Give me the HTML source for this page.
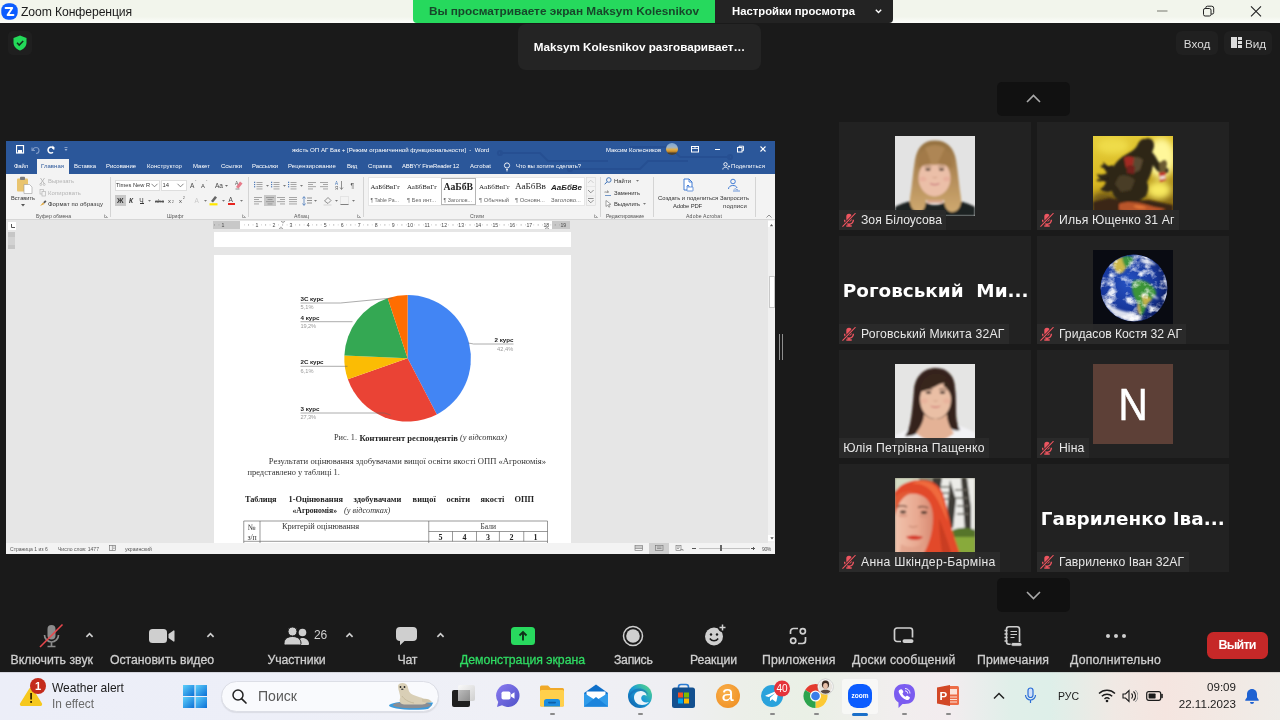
<!DOCTYPE html>
<html lang="ru">
<head>
<meta charset="utf-8">
<title>Zoom Конференция</title>
<style>
*{box-sizing:border-box;margin:0;padding:0}
html,body{width:1280px;height:720px;overflow:hidden;background:#1a1a1a;font-family:"Liberation Sans","DejaVu Sans",sans-serif;}
.abs{position:absolute}
#root{will-change:transform;position:relative;width:1280px;height:720px;overflow:hidden;background:#1a1a1a}
/* title bar */
#titlebar{left:0;top:0;width:1280px;height:22.500px;background:linear-gradient(180deg,#f2f5ec 0,#f2f5ec 72%,#fcfdfa 100%)}
#titlebar .ttl{left:21px;top:4.5px;font-size:12.2px;color:#1c1c1c;letter-spacing:-0.1px;white-space:nowrap}
#banner{left:413px;top:0;width:302px;height:22.500px;background:#26d95d;border-radius:0 0 0 4px;color:#17472a;font-weight:bold;font-size:11.800px;text-align:center;line-height:22px;white-space:nowrap}
#viewset{left:715px;top:0;width:178px;height:22.500px;background:#232323;border-radius:0 0 4px 0;color:#fff;font-weight:bold;font-size:11.300px;line-height:22px;white-space:nowrap;padding-left:17px}
/* toast */
#toast{left:518px;top:24px;width:243px;height:46px;background:#242424;border-radius:8px;color:#fff;font-weight:bold;font-size:11.700px;line-height:46px;text-align:center;white-space:nowrap}
.tbtn{background:#202020;border-radius:6px;color:#dadada;font-size:11.700px;line-height:25px;height:24px;white-space:nowrap}
/* tiles */
.tile{background:#222222;width:191.500px;height:107.600px}
.tile .lbl{position:absolute;left:0;bottom:0;height:19.600px;background:rgba(42,42,42,.94);color:#e8e8e8;font-size:12.200px;line-height:21.600px;white-space:nowrap;padding:0 4.500px 0 21.800px}
.tile .lbl.nomic{padding-left:4px}
.tile .big{position:absolute;left:3.600px;top:43.300px;color:#fff;font-weight:bold;font-size:18.400px;white-space:nowrap;font-family:"DejaVu Sans","Liberation Sans",sans-serif}
.av{position:absolute;left:55.800px;top:13.600px;width:80px;height:80px;overflow:hidden}
.mic{position:absolute;left:2.800px;top:3px}
.tx{position:absolute;white-space:pre}
.navbtn{background:#111;border-radius:5px;width:73px;height:34px}
/* zoom toolbar */
.zb{position:absolute;top:653px;color:#ddd;font-size:12.5px;white-space:nowrap;transform:translateX(-50%)}
/* taskbar */
#taskbar{left:0;top:672px;width:1280px;height:48px;background:linear-gradient(90deg,#eef0f6 0%,#e9eff7 30%,#e6eef6 55%,#f1ece9 75%,#f3ece6 100%)}
</style>
</head>
<body>
<div id="root">
<!-- TITLEBAR -->
<div id="titlebar" class="abs">
  <svg class="abs" style="left:1px;top:3px" width="17" height="17" viewBox="0 0 17 17"><rect x="0.300" y="0.300" width="16.400" height="16.400" rx="7" fill="#0b5cff"/><path d="M4.6 5h6.6L6.6 12h5.8" fill="none" stroke="#fff" stroke-width="2" stroke-linejoin="round" stroke-linecap="round"/></svg>
  <div class="abs ttl">Zoom Конференция</div>
  <svg class="abs" style="left:1150px;top:0" width="130" height="22" viewBox="0 0 130 22"><path d="M7 11h10.500" stroke="#8a8c84" stroke-width="1.200"/><rect x="53.500" y="8.500" width="7.500" height="7.500" rx="1.600" fill="none" stroke="#222" stroke-width="1"/><path d="M55.800 8.500v-0.700a1.600 1.600 0 0 1 1.600-1.600h4.300a2 2 0 0 1 2 2v4.300a1.600 1.600 0 0 1-1.600 1.600h-1" fill="none" stroke="#222" stroke-width="1"/><path d="M101 6.300l10 10M111 6.300l-10 10" stroke="#222" stroke-width="1.100"/></svg>
</div>
<div id="banner" class="abs">Вы просматриваете экран Maksym Kolesnikov</div>
<div id="viewset" class="abs">Настройки просмотра<svg class="abs" style="left:160px;top:9px" width="7" height="5" viewBox="0 0 7 5"><path d="M0.800 0.800l2.700 2.700L6.200 0.800" fill="none" stroke="#fff" stroke-width="1.400"/></svg></div>
<!-- shield -->
<div class="abs" style="left:8px;top:31px;width:24px;height:24px;border-radius:5px;background:#1f1f1f"></div>
<svg class="abs" style="left:13px;top:35px" width="14" height="16" viewBox="0 0 14 16"><path d="M7 0.500L13.500 3v4.500c0 4-3 6.800-6.500 8C3.500 14.300 0.500 11.500 0.500 7.500V3z" fill="#23d959"/><path d="M4 7.800l2.200 2.200L10.200 6" fill="none" stroke="#14301c" stroke-width="1.600"/></svg>
<div id="toast" class="abs">Maksym Kolesnikov разговаривает…</div>
<div class="abs tbtn" style="left:1176px;top:31px;width:42px;text-align:center">Вход</div>
<div class="abs tbtn" style="left:1224px;top:31px;width:48px;padding-left:21px">Вид<svg class="abs" style="left:7px;top:6px" width="11" height="11" viewBox="0 0 11 11"><rect x="0" y="0" width="6" height="11" fill="#ddd"/><rect x="7" y="0" width="4" height="3" fill="#ddd"/><rect x="7" y="4" width="4" height="3" fill="#ddd"/><rect x="7" y="8" width="4" height="3" fill="#ddd"/></svg></div>

<!-- WORD -->
<div id="word" class="abs" style="left:6px;top:141px;width:769px;height:412.700px;background:#e6e6e6;overflow:hidden"></div>
<div class="abs" style="left:6px;top:141px;width:769px;height:33px;background:#2b579a;"></div>
<div class="abs" style="left:6px;top:174px;width:769px;height:45.5px;background:#f3f3f3;"></div>
<div class="abs" style="left:6px;top:219px;width:769px;height:1px;background:#d6d6d6;"></div>
<svg class="abs" style="left:480px;top:141px" width="295" height="33" viewBox="0 0 295 33"><g fill="none" stroke="#234a8c" stroke-width="2.200" opacity=".55"><path d="M20 12h40l8 8h60M150 6h40l10 10h50M90 28h70l8-8h40"/><circle cx="20" cy="12" r="2"/><circle cx="250" cy="16" r="2"/><circle cx="90" cy="28" r="2"/></g></svg>
<svg class="abs" style="left:16px;top:145px" width="60" height="10" viewBox="0 0 60 10"><rect x="0.500" y="0.500" width="7" height="7.500" fill="none" stroke="#fff" stroke-width="1.200"/><rect x="2" y="5" width="4" height="3" fill="#fff"/><path d="M17 5.500a3 3 0 1 1 3 3M16 2.500v3h3" fill="none" stroke="#7f9ac6" stroke-width="1.100"/><path d="M38 4.500a3 3 0 1 0-1 2.800" fill="none" stroke="#fff" stroke-width="1.500"/><path d="M36.500 0.500l2.300 2.200-2.800 1.200z" fill="#fff"/><path d="M48.500 4h3l-1.500 2z" fill="#9fb4d6"/><path d="M48.500 2.500h3" stroke="#9fb4d6" stroke-width=".8"/></svg>
<div class="abs" style="left:666px;top:143px;width:12px;height:12px;border-radius:6px;background:linear-gradient(180deg,#7fa6cf 0%,#9db4c8 35%,#e2ad45 55%,#c98f2e 70%,#4a4030 85%)"></div>
<svg class="abs" style="left:690px;top:145px" width="80" height="9" viewBox="0 0 80 9"><rect x="1.500" y="1.500" width="7" height="5.500" fill="none" stroke="#fff" stroke-width="1"/><path d="M1.500 3.500h7M5 3.500v-2" stroke="#fff" stroke-width=".8"/><path d="M25 4.500h5" stroke="#fff" stroke-width="1"/><rect x="47.500" y="2.500" width="4.500" height="4.500" fill="none" stroke="#fff" stroke-width="1"/><path d="M49 2.500v-1.300h4.500v4.500h-1.500" fill="none" stroke="#fff" stroke-width=".9"/><path d="M70.500 1.500l5 5M75.500 1.500l-5 5" stroke="#fff" stroke-width="1.100"/></svg>
<div class="abs" style="left:36.500px;top:158.500px;width:32.500px;height:16px;background:#f3f3f3"></div>
<svg class="abs" style="left:503px;top:161.500px" width="8" height="10" viewBox="0 0 8 10"><circle cx="4" cy="3.500" r="2.600" fill="none" stroke="#fff" stroke-width=".9"/><path d="M3 7.500h2M3.200 8.800h1.600" stroke="#fff" stroke-width=".8"/></svg>
<svg class="abs" style="left:722px;top:162px" width="8" height="8" viewBox="0 0 8 8"><circle cx="3.500" cy="2.300" r="1.700" fill="none" stroke="#fff" stroke-width=".9"/><path d="M0.800 7.500c0-3 5.400-3 5.400 0" fill="none" stroke="#fff" stroke-width=".9"/><path d="M6 4.500h2M7 3.500v2" stroke="#fff" stroke-width=".7"/></svg>
<svg class="abs" style="left:16px;top:176px" width="17" height="18" viewBox="0 0 17 18"><rect x="1" y="2.500" width="11" height="13" rx="1" fill="#e9c46f"/><rect x="4" y="0.800" width="5" height="3.200" rx=".8" fill="#7d7d7d"/><path d="M8 8.500h5.500l2.500 2.500v6.500H8z" fill="#fff" stroke="#9a9a9a" stroke-width=".6"/></svg>
<svg class="abs" style="left:21px;top:204px" width="4" height="3" viewBox="0 0 4 3"><path d="M0 0h4l-2 2.500z" fill="#555"/></svg>
<svg class="abs" style="left:39px;top:177px" width="8" height="31" viewBox="0 0 8 31"><path d="M1.500 1l4 6M5.500 1l-4 6" stroke="#b0b0b0" stroke-width=".8"/><circle cx="1.800" cy="7.500" r="1" fill="none" stroke="#b0b0b0" stroke-width=".6"/><circle cx="5.200" cy="7.500" r="1" fill="none" stroke="#b0b0b0" stroke-width=".6"/><rect x="1" y="12.500" width="3.500" height="4.500" fill="none" stroke="#b7b7b7" stroke-width=".7"/><rect x="3" y="14.500" width="3.500" height="4.500" fill="#f3f3f3" stroke="#b7b7b7" stroke-width=".7"/><path d="M1 29l3-3.500 1.500 1.500z" fill="#e2a83a"/><path d="M4.200 25.300l2-2 1.300 1.300-2 2z" fill="#555"/></svg>
<svg class="abs" style="left:104px;top:213.500px" width="4" height="4" viewBox="0 0 4 4"><path d="M0.500 0.500v3h3M1.500 1.500l2 2" fill="none" stroke="#777" stroke-width=".6"/></svg>
<div class="abs" style="left:110px;top:177px;width:0.7px;height:40px;background:#d4d4d4;"></div>
<div class="abs" style="left:248px;top:177px;width:0.7px;height:40px;background:#d4d4d4;"></div>
<div class="abs" style="left:362.5px;top:177px;width:0.7px;height:40px;background:#d4d4d4;"></div>
<div class="abs" style="left:600px;top:177px;width:0.7px;height:40px;background:#d4d4d4;"></div>
<div class="abs" style="left:652.5px;top:177px;width:0.7px;height:40px;background:#d4d4d4;"></div>
<div class="abs" style="left:754.7px;top:177px;width:0.7px;height:40px;background:#d4d4d4;"></div>
<div class="abs" style="left:114.500px;top:180px;width:45px;height:10.500px;background:#fff;border:.5px solid #dedede"></div>
<div class="abs" style="left:160.500px;top:180px;width:26.500px;height:10.500px;background:#fff;border:.5px solid #dedede"></div>
<svg class="abs" style="left:151px;top:183px" width="34" height="5" viewBox="0 0 34 5"><path d="M0.500 0.800l3 3 3-3M26.500 0.800l3 3 3-3" fill="none" stroke="#555" stroke-width=".7"/></svg>
<svg class="abs" style="left:224.500px;top:184.500px" width="3" height="2" viewBox="0 0 3 2"><path d="M0 0h3l-1.500 1.800z" fill="#666"/></svg>
<svg class="abs" style="left:235px;top:180px" width="9" height="10" viewBox="0 0 9 10"><path d="M1 7l4-5.500 2.500 2-4 5z" fill="#e77b8a"/><path d="M0.500 9h4" stroke="#666" stroke-width=".7"/><text x="0" y="5" font-size="5" font-family="Liberation Sans" fill="#555">A</text></svg>
<div class="abs" style="left:114.5px;top:194.5px;width:11.5px;height:11.5px;background:#c8c8c8;"></div>
<div class="abs" style="left:139.5px;top:203.2px;width:4.5px;height:0.6px;background:#333;"></div>
<div class="abs" style="left:155px;top:200.5px;width:9px;height:0.5px;background:#555;"></div>
<svg class="abs" style="left:148px;top:199.800px" width="3" height="2" viewBox="0 0 3 2"><path d="M0 0h3l-1.500 1.800z" fill="#777"/></svg>
<svg class="abs" style="left:204px;top:199.800px" width="3" height="2" viewBox="0 0 3 2"><path d="M0 0h3l-1.500 1.800z" fill="#777"/></svg>
<svg class="abs" style="left:222px;top:199.800px" width="3" height="2" viewBox="0 0 3 2"><path d="M0 0h3l-1.500 1.800z" fill="#777"/></svg>
<svg class="abs" style="left:240px;top:199.800px" width="3" height="2" viewBox="0 0 3 2"><path d="M0 0h3l-1.500 1.800z" fill="#777"/></svg>
<svg class="abs" style="left:209px;top:195px" width="9" height="11" viewBox="0 0 9 11"><path d="M2 6l4-5 2 1.600-4 5z" fill="#666"/><rect x="0.500" y="8.200" width="8" height="2.200" fill="#ffe600"/></svg>
<div class="abs" style="left:227.5px;top:203.3px;width:7.5px;height:2px;background:#e8251f;"></div>
<svg class="abs" style="left:242px;top:213.500px" width="4" height="4" viewBox="0 0 4 4"><path d="M0.500 0.500v3h3M1.500 1.500l2 2" fill="none" stroke="#777" stroke-width=".6"/></svg>
<svg class="abs" style="left:254px;top:181px" width="9" height="9" viewBox="0 0 9 9"><rect x="2.5" y="1" width="6" height=".7" fill="#858585"/><rect x="0" y="0.75" width="1.200" height="1.200" fill="#4a78b8"/><rect x="2.5" y="3.2" width="6" height=".7" fill="#858585"/><rect x="0" y="2.95" width="1.200" height="1.200" fill="#4a78b8"/><rect x="2.5" y="5.4" width="6" height=".7" fill="#858585"/><rect x="0" y="5.15" width="1.200" height="1.200" fill="#4a78b8"/><rect x="2.5" y="7.6" width="6" height=".7" fill="#858585"/></svg>
<svg class="abs" style="left:271px;top:181px" width="9" height="9" viewBox="0 0 9 9"><rect x="2.5" y="1" width="6" height=".7" fill="#858585"/><rect x="0" y="0.75" width="1.200" height="1.200" fill="#4a78b8"/><rect x="2.5" y="3.2" width="6" height=".7" fill="#858585"/><rect x="0" y="2.95" width="1.200" height="1.200" fill="#4a78b8"/><rect x="2.5" y="5.4" width="6" height=".7" fill="#858585"/><rect x="0" y="5.15" width="1.200" height="1.200" fill="#4a78b8"/><rect x="2.5" y="7.6" width="6" height=".7" fill="#858585"/></svg>
<svg class="abs" style="left:288px;top:181px" width="9" height="9" viewBox="0 0 9 9"><rect x="2.5" y="1" width="6" height=".7" fill="#858585"/><rect x="0" y="0.75" width="1.200" height="1.200" fill="#4a78b8"/><rect x="2.5" y="3.2" width="6" height=".7" fill="#858585"/><rect x="0" y="2.95" width="1.200" height="1.200" fill="#4a78b8"/><rect x="2.5" y="5.4" width="6" height=".7" fill="#858585"/><rect x="0" y="5.15" width="1.200" height="1.200" fill="#4a78b8"/><rect x="2.5" y="7.6" width="6" height=".7" fill="#858585"/></svg>
<svg class="abs" style="left:308px;top:181px" width="9" height="9" viewBox="0 0 9 9"><rect x="0" y="1" width="8" height=".7" fill="#858585"/><rect x="0" y="3.2" width="5" height=".7" fill="#858585"/><rect x="0" y="5.4" width="8" height=".7" fill="#858585"/><rect x="0" y="7.6" width="5" height=".7" fill="#858585"/></svg>
<svg class="abs" style="left:320px;top:181px" width="9" height="9" viewBox="0 0 9 9"><rect x="0" y="1" width="8" height=".7" fill="#858585"/><rect x="3" y="3.2" width="5" height=".7" fill="#858585"/><rect x="0" y="5.4" width="8" height=".7" fill="#858585"/><rect x="3" y="7.6" width="5" height=".7" fill="#858585"/></svg>
<svg class="abs" style="left:265.5px;top:184.500px" width="3" height="2" viewBox="0 0 3 2"><path d="M0 0h3l-1.500 1.800z" fill="#777"/></svg>
<svg class="abs" style="left:282.5px;top:184.500px" width="3" height="2" viewBox="0 0 3 2"><path d="M0 0h3l-1.500 1.800z" fill="#777"/></svg>
<svg class="abs" style="left:299.5px;top:184.500px" width="3" height="2" viewBox="0 0 3 2"><path d="M0 0h3l-1.500 1.800z" fill="#777"/></svg>
<svg class="abs" style="left:335px;top:180px" width="9" height="11" viewBox="0 0 9 11"><text x="0" y="4.500" font-size="4.500" font-family="Liberation Sans" fill="#3a6fb5">А</text><text x="0" y="9.500" font-size="4.500" font-family="Liberation Sans" fill="#666">Я</text><path d="M6.500 1v8M5 7.500l1.500 2 1.500-2" fill="none" stroke="#666" stroke-width=".7"/></svg>
<div class="abs" style="left:264px;top:194.5px;width:11.5px;height:11.5px;background:#c8c8c8;"></div>
<svg class="abs" style="left:254px;top:196px" width="9" height="9" viewBox="0 0 9 9"><rect x="0" y="1" width="8" height=".7" fill="#858585"/><rect x="0" y="3.2" width="5" height=".7" fill="#858585"/><rect x="0" y="5.4" width="8" height=".7" fill="#858585"/><rect x="0" y="7.6" width="5" height=".7" fill="#858585"/></svg>
<svg class="abs" style="left:265.5px;top:196px" width="9" height="9" viewBox="0 0 9 9"><rect x="0" y="1" width="8" height=".7" fill="#858585"/><rect x="1.5" y="3.2" width="5" height=".7" fill="#858585"/><rect x="0" y="5.4" width="8" height=".7" fill="#858585"/><rect x="1.5" y="7.6" width="5" height=".7" fill="#858585"/></svg>
<svg class="abs" style="left:277px;top:196px" width="9" height="9" viewBox="0 0 9 9"><rect x="0" y="1" width="8" height=".7" fill="#858585"/><rect x="3" y="3.2" width="5" height=".7" fill="#858585"/><rect x="0" y="5.4" width="8" height=".7" fill="#858585"/><rect x="3" y="7.6" width="5" height=".7" fill="#858585"/></svg>
<svg class="abs" style="left:288.5px;top:196px" width="9" height="9" viewBox="0 0 9 9"><rect x="0" y="1" width="8" height=".7" fill="#858585"/><rect x="0" y="3.2" width="8" height=".7" fill="#858585"/><rect x="0" y="5.4" width="8" height=".7" fill="#858585"/><rect x="0" y="7.6" width="8" height=".7" fill="#858585"/></svg>
<svg class="abs" style="left:302px;top:195.500px" width="10" height="10" viewBox="0 0 10 10"><path d="M2 1v8M0.500 2.500l1.500-2 1.500 2M0.500 7.500l1.500 2 1.500-2" fill="none" stroke="#3a6fb5" stroke-width=".7"/><path d="M5 2h5M5 4.500h5M5 7h5" stroke="#666" stroke-width=".7"/></svg>
<svg class="abs" style="left:323px;top:195.500px" width="10" height="10" viewBox="0 0 10 10"><path d="M1.500 5l3.500-3.500 3 3-3 3z" fill="none" stroke="#666" stroke-width=".7"/><rect x="0.500" y="8.200" width="8" height="1.600" fill="#e0e0e0"/></svg>
<svg class="abs" style="left:340px;top:196px" width="9" height="9" viewBox="0 0 9 9"><rect x="0.500" y="0.500" width="8" height="8" fill="none" stroke="#c5c5c5" stroke-width=".6" stroke-dasharray="1 1"/><path d="M0.500 8.500h8" stroke="#666" stroke-width=".8"/></svg>
<svg class="abs" style="left:313.5px;top:199.800px" width="3" height="2" viewBox="0 0 3 2"><path d="M0 0h3l-1.500 1.800z" fill="#777"/></svg>
<svg class="abs" style="left:334.5px;top:199.800px" width="3" height="2" viewBox="0 0 3 2"><path d="M0 0h3l-1.500 1.800z" fill="#777"/></svg>
<svg class="abs" style="left:351.5px;top:199.800px" width="3" height="2" viewBox="0 0 3 2"><path d="M0 0h3l-1.500 1.800z" fill="#777"/></svg>
<svg class="abs" style="left:357px;top:213.500px" width="4" height="4" viewBox="0 0 4 4"><path d="M0.500 0.500v3h3M1.500 1.500l2 2" fill="none" stroke="#777" stroke-width=".6"/></svg>
<div class="abs" style="left:367.500px;top:177px;width:217px;height:28.500px;background:#fff;border:.6px solid #e6e6e6"></div>
<div class="abs" style="left:441px;top:177.500px;width:34.500px;height:27.500px;border:1px solid #b5b5b5;background:#fff"></div>
<svg class="abs" style="left:586px;top:177px" width="10" height="29" viewBox="0 0 10 29"><rect x="0.300" y="0.300" width="9" height="28" fill="#f3f3f3" stroke="#d8d8d8" stroke-width=".6"/><path d="M2 6l2.800-2.800L7.600 6" fill="none" stroke="#c0c0c0" stroke-width=".7"/><path d="M2 13l2.800 2.800L7.600 13" fill="none" stroke="#666" stroke-width=".7"/><path d="M2 21.500h5.600M2 23l2.800 2.800L7.600 23" fill="none" stroke="#666" stroke-width=".7"/><path d="M0.300 9.500h9M0.300 19h9" stroke="#d8d8d8" stroke-width=".5"/></svg>
<svg class="abs" style="left:594px;top:213.500px" width="4" height="4" viewBox="0 0 4 4"><path d="M0.500 0.500v3h3M1.500 1.500l2 2" fill="none" stroke="#777" stroke-width=".6"/></svg>
<svg class="abs" style="left:604px;top:177px" width="9" height="31" viewBox="0 0 9 31"><circle cx="4.800" cy="3" r="2.300" fill="none" stroke="#3a6fb5" stroke-width=".9"/><path d="M3 4.800l-2.300 2.500" stroke="#3a6fb5" stroke-width="1"/><text x="0.500" y="16" font-size="4" font-family="Liberation Sans" fill="#666">ab</text><path d="M1 18.500h6" stroke="#3a6fb5" stroke-width=".7"/><path d="M2 23.500l0 6 1.700-1.500 1.200 2.200 1-.5-1.200-2.200 2.200-.2z" fill="#fff" stroke="#666" stroke-width=".6"/></svg>
<svg class="abs" style="left:636px;top:180px" width="3" height="2" viewBox="0 0 3 2"><path d="M0 0h3l-1.500 1.800z" fill="#777"/></svg>
<svg class="abs" style="left:642.5px;top:203px" width="3" height="2" viewBox="0 0 3 2"><path d="M0 0h3l-1.500 1.800z" fill="#777"/></svg>
<svg class="abs" style="left:682px;top:178px" width="12" height="14" viewBox="0 0 12 14"><path d="M2 1h5l3 3v8H2z" fill="#fff" stroke="#2f6fd0" stroke-width=".9"/><path d="M7 1v3h3" fill="none" stroke="#2f6fd0" stroke-width=".8"/><path d="M6 11V7M4.500 8.500L6 7l1.500 1.500" fill="none" stroke="#2f6fd0" stroke-width=".8"/><rect x="5" y="9" width="6" height="4" rx=".5" fill="#fff" stroke="#2f6fd0" stroke-width=".7"/></svg>
<svg class="abs" style="left:727px;top:178px" width="14" height="14" viewBox="0 0 14 14"><circle cx="6" cy="3.500" r="2.300" fill="none" stroke="#2f6fd0" stroke-width=".9"/><path d="M1.500 11c0-4.500 8-4.500 8.500-1" fill="none" stroke="#2f6fd0" stroke-width=".9"/><path d="M7 11.500c1.500-2 2.500 1 4 0M6 13h7" fill="none" stroke="#2f6fd0" stroke-width=".7"/></svg>
<svg class="abs" style="left:765.500px;top:214px" width="6" height="4" viewBox="0 0 6 4"><path d="M0.500 3.500l2.500-2.500 2.500 2.500" fill="none" stroke="#666" stroke-width=".7"/></svg>
<div class="abs" style="left:8px;top:221.5px;width:7.5px;height:8px;background:#fff;"></div>
<svg class="abs" style="left:10.500px;top:223.500px" width="4" height="4" viewBox="0 0 4 4"><path d="M0.500 0v3.500H4" fill="none" stroke="#444" stroke-width=".9"/></svg>
<div class="abs" style="left:8.2px;top:232px;width:6.6px;height:5px;background:#c6c6c6;"></div>
<div class="abs" style="left:8.2px;top:237px;width:6.6px;height:8px;background:#d2d2d2;"></div>
<div class="abs" style="left:8.2px;top:245px;width:6.6px;height:3.5px;background:#c6c6c6;"></div>
<div class="abs" style="left:8px;top:255px;width:8px;height:288px;background:#e0e0e0;opacity:.0"></div>
<div class="abs" style="left:213.4px;top:221px;width:356.6px;height:7.6px;background:#fff;"></div>
<div class="abs" style="left:213.4px;top:221px;width:27px;height:7.6px;background:#c8c8c8;"></div>
<div class="abs" style="left:552px;top:221px;width:18px;height:7.6px;background:#c8c8c8;"></div>
<svg class="abs" style="left:213.400px;top:221px" width="357" height="8" viewBox="0 0 357 8"><g fill="#4a4a4a" font-family="Liberation Sans" font-size="5.200" text-anchor="middle"><text x="9.98" y="5.900">1</text><rect x="5.725" y="3.5" width=".5" height="0.8" fill="#888"/><rect x="1.47" y="3" width=".5" height="1.8" fill="#888"/><text x="44.02" y="5.900">1</text><rect x="39.765" y="3.5" width=".5" height="0.8" fill="#888"/><rect x="35.51" y="3" width=".5" height="1.8" fill="#888"/><rect x="31.255" y="3.5" width=".5" height="0.8" fill="#888"/><text x="61.04" y="5.900">2</text><rect x="56.785" y="3.5" width=".5" height="0.8" fill="#888"/><rect x="52.53" y="3" width=".5" height="1.8" fill="#888"/><rect x="48.275" y="3.5" width=".5" height="0.8" fill="#888"/><text x="78.06" y="5.900">3</text><rect x="73.805" y="3.5" width=".5" height="0.8" fill="#888"/><rect x="69.55" y="3" width=".5" height="1.8" fill="#888"/><rect x="65.295" y="3.5" width=".5" height="0.8" fill="#888"/><text x="95.08" y="5.900">4</text><rect x="90.825" y="3.5" width=".5" height="0.8" fill="#888"/><rect x="86.57" y="3" width=".5" height="1.8" fill="#888"/><rect x="82.315" y="3.5" width=".5" height="0.8" fill="#888"/><text x="112.1" y="5.900">5</text><rect x="107.845" y="3.5" width=".5" height="0.8" fill="#888"/><rect x="103.59" y="3" width=".5" height="1.8" fill="#888"/><rect x="99.335" y="3.5" width=".5" height="0.8" fill="#888"/><text x="129.12" y="5.900">6</text><rect x="124.865" y="3.5" width=".5" height="0.8" fill="#888"/><rect x="120.61" y="3" width=".5" height="1.8" fill="#888"/><rect x="116.355" y="3.5" width=".5" height="0.8" fill="#888"/><text x="146.14" y="5.900">7</text><rect x="141.885" y="3.5" width=".5" height="0.8" fill="#888"/><rect x="137.63" y="3" width=".5" height="1.8" fill="#888"/><rect x="133.375" y="3.5" width=".5" height="0.8" fill="#888"/><text x="163.16" y="5.900">8</text><rect x="158.905" y="3.5" width=".5" height="0.8" fill="#888"/><rect x="154.65" y="3" width=".5" height="1.8" fill="#888"/><rect x="150.395" y="3.5" width=".5" height="0.8" fill="#888"/><text x="180.18" y="5.900">9</text><rect x="175.925" y="3.5" width=".5" height="0.8" fill="#888"/><rect x="171.67" y="3" width=".5" height="1.8" fill="#888"/><rect x="167.415" y="3.5" width=".5" height="0.8" fill="#888"/><text x="197.2" y="5.900">10</text><rect x="192.945" y="3.5" width=".5" height="0.8" fill="#888"/><rect x="188.69" y="3" width=".5" height="1.8" fill="#888"/><rect x="184.435" y="3.5" width=".5" height="0.8" fill="#888"/><text x="214.22" y="5.900">11</text><rect x="209.965" y="3.5" width=".5" height="0.8" fill="#888"/><rect x="205.71" y="3" width=".5" height="1.8" fill="#888"/><rect x="201.455" y="3.5" width=".5" height="0.8" fill="#888"/><text x="231.24" y="5.900">12</text><rect x="226.985" y="3.5" width=".5" height="0.8" fill="#888"/><rect x="222.73" y="3" width=".5" height="1.8" fill="#888"/><rect x="218.475" y="3.5" width=".5" height="0.8" fill="#888"/><text x="248.26" y="5.900">13</text><rect x="244.005" y="3.5" width=".5" height="0.8" fill="#888"/><rect x="239.75" y="3" width=".5" height="1.8" fill="#888"/><rect x="235.495" y="3.5" width=".5" height="0.8" fill="#888"/><text x="265.28" y="5.900">14</text><rect x="261.025" y="3.5" width=".5" height="0.8" fill="#888"/><rect x="256.77" y="3" width=".5" height="1.8" fill="#888"/><rect x="252.515" y="3.5" width=".5" height="0.8" fill="#888"/><text x="282.3" y="5.900">15</text><rect x="278.045" y="3.5" width=".5" height="0.8" fill="#888"/><rect x="273.79" y="3" width=".5" height="1.8" fill="#888"/><rect x="269.535" y="3.5" width=".5" height="0.8" fill="#888"/><text x="299.32" y="5.900">16</text><rect x="295.065" y="3.5" width=".5" height="0.8" fill="#888"/><rect x="290.81" y="3" width=".5" height="1.8" fill="#888"/><rect x="286.555" y="3.5" width=".5" height="0.8" fill="#888"/><text x="316.34" y="5.900">17</text><rect x="312.085" y="3.5" width=".5" height="0.8" fill="#888"/><rect x="307.83" y="3" width=".5" height="1.8" fill="#888"/><rect x="303.575" y="3.5" width=".5" height="0.8" fill="#888"/><text x="333.36" y="5.900">18</text><rect x="329.105" y="3.5" width=".5" height="0.8" fill="#888"/><rect x="324.85" y="3" width=".5" height="1.8" fill="#888"/><rect x="320.595" y="3.5" width=".5" height="0.8" fill="#888"/><text x="350.38" y="5.900">19</text><rect x="346.125" y="3.5" width=".5" height="0.8" fill="#888"/><rect x="341.87" y="3" width=".5" height="1.8" fill="#888"/><rect x="337.615" y="3.5" width=".5" height="0.8" fill="#888"/></g><path d="M68 0l2 2.200 2-2.200zM66 8l2-2.200 2 2.200z" fill="#eee" stroke="#777" stroke-width=".5"/><path d="M332 8l2-2.200 2 2.200z" fill="#eee" stroke="#777" stroke-width=".5"/></svg>
<div class="abs" style="left:214px;top:231.5px;width:356.5px;height:15.5px;background:#fff;"></div>
<div class="abs" style="left:214px;top:255px;width:356.5px;height:288px;background:#fff;"></div>
<div class="abs" style="left:767.5px;top:220px;width:7.5px;height:323px;background:#f0f0f0;"></div>
<div class="abs" style="left:768.2px;top:535.2px;width:6.3px;height:6.2px;background:#fff;"></div>
<svg class="abs" style="left:769.500px;top:537px" width="4" height="3" viewBox="0 0 4 3"><path d="M0.300 0.300h3.400l-1.700 2.200z" fill="#555"/></svg>
<div class="abs" style="left:768.2px;top:221px;width:6.3px;height:6.2px;background:#fff;"></div>
<div class="abs" style="left:768.5px;top:276px;width:6px;height:32px;background:#fff;border:.5px solid #c8c8c8"></div>
<svg class="abs" style="left:769px;top:222.500px" width="5" height="4" viewBox="0 0 5 4"><path d="M0.800 3.200l1.700-2.200 1.700 2.200z" fill="#555"/></svg>
<svg class="abs" style="left:0;top:0" width="1280" height="720" viewBox="0 0 1280 720"><path d="M407.6 358.3L407.60 295.00A63.3 63.3 0 0 1 436.84 414.44Z" fill="#4285f4"/><path d="M407.6 358.3L436.84 414.44A63.3 63.3 0 0 1 347.87 379.25Z" fill="#ea4335"/><path d="M407.6 358.3L347.87 379.25A63.3 63.3 0 0 1 344.37 355.42Z" fill="#fbbc04"/><path d="M407.6 358.3L344.37 355.42A63.3 63.3 0 0 1 387.68 298.22Z" fill="#34a853"/><path d="M407.6 358.3L387.68 298.22A63.3 63.3 0 0 1 407.60 295.00Z" fill="#ff6d01"/><g fill="none" stroke="#666" stroke-width=".55"><path d="M300.500 303h40l52-5"/><path d="M300.500 321.700h52"/><path d="M300.500 366.300h47"/><path d="M300.500 413h84l6 2"/><path d="M513.500 344h-40l-5-1"/></g></svg>
<svg class="abs" style="left:0;top:0" width="1280" height="720" viewBox="0 0 1280 720"><g fill="none" stroke="#555" stroke-width=".6"><path d="M243.750 543V521h303.750v22M260 521v22M428.750 521v22M428.750 531.500h118.750M243.750 541.300h303.750M452.500 531.500v9.800M476.500 531.500v9.800M499.400 531.500v9.800M523.750 531.500v9.800"/></g></svg>
<div class="abs" style="left:6px;top:542.8px;width:769px;height:10.9px;background:#f3f3f3;"></div>
<svg class="abs" style="left:108.500px;top:545px" width="7" height="6" viewBox="0 0 7 6"><rect x="0.400" y="0.400" width="6" height="5" fill="none" stroke="#666" stroke-width=".6"/><path d="M3.400 0.400v5M4.200 2h1.500M4.200 3.500h1.500" stroke="#666" stroke-width=".5"/></svg>
<div class="abs" style="left:649.3px;top:543px;width:19.7px;height:10.5px;background:#cfcfcf;"></div>
<svg class="abs" style="left:634px;top:545px" width="52" height="6" viewBox="0 0 52 6"><g fill="none" stroke="#707070" stroke-width=".6"><rect x="1" y="0.500" width="7.500" height="5"/><path d="M1 2h7.500M1 3.500h7.500"/><rect x="21.500" y="0.500" width="7.500" height="5"/><path d="M23 2h4.500M23 3.500h4.500"/><rect x="42" y="0.500" width="5" height="5"/><path d="M43 2h3M43 3.500h2M46.500 4.500h2.500v1.500"/></g></svg>
<div class="abs" style="left:691.7px;top:548.2px;width:4px;height:0.7px;background:#555;"></div>
<div class="abs" style="left:698.6px;top:548.3px;width:51px;height:0.5px;background:#c2c2c2;"></div>
<div class="abs" style="left:719.6px;top:545.3px;width:2.2px;height:6.2px;background:#666;"></div>
<div class="abs" style="left:751px;top:548.2px;width:3.8px;height:0.7px;background:#555;"></div>
<div class="abs" style="left:752.55px;top:546.5px;width:0.7px;height:3.8px;background:#555;"></div>
<svg class="abs" style="left:38px;top:622px" width="28" height="28" viewBox="0 0 28 28"><rect x="9.500" y="3" width="8" height="14.500" rx="4" fill="#8c8c8c"/><path d="M6.500 13a7 7 0 0 0 14 0M13.500 20v4M9.500 24.500h8" fill="none" stroke="#8c8c8c" stroke-width="1.700"/><path d="M24.500 2.500L2 25" stroke="#e8474c" stroke-width="1.600"/></svg>
<svg class="abs" style="left:85px;top:632.2px" width="9" height="6" viewBox="0 0 9 6"><path d="M1.400 4.800l3.100-3.100 3.100 3.100" fill="none" stroke="#cfcfcf" stroke-width="1.700"/></svg>
<svg class="abs" style="left:148px;top:628px" width="28" height="16" viewBox="0 0 28 16"><rect x="1" y="1" width="18" height="14" rx="3.500" fill="#cfcfcf"/><path d="M20.500 6l5-3.500a.6.600 0 0 1 1 .5v10a.6.600 0 0 1-1 .5l-5-3.500z" fill="#cfcfcf"/></svg>
<svg class="abs" style="left:205.5px;top:632.2px" width="9" height="6" viewBox="0 0 9 6"><path d="M1.400 4.800l3.100-3.100 3.100 3.100" fill="none" stroke="#cfcfcf" stroke-width="1.700"/></svg>
<svg class="abs" style="left:283px;top:626px" width="27" height="20" viewBox="0 0 27 20"><circle cx="19.500" cy="6.500" r="3.800" fill="#cfcfcf"/><path d="M15 19c-.5-5 2-7 4.500-7s6 1.500 6.500 5.500c0 1-.5 1.500-1.500 1.500z" fill="#cfcfcf"/><circle cx="9.500" cy="5.500" r="4.500" fill="#cfcfcf" stroke="#1a1a1a" stroke-width="1"/><path d="M1 17.500c0-5 4-7 8.500-7s8.500 2 8.500 7c0 1-.6 1.500-1.500 1.500h-14c-.9 0-1.500-.5-1.500-1.500z" fill="#cfcfcf" stroke="#1a1a1a" stroke-width="1"/></svg>
<svg class="abs" style="left:345px;top:632.2px" width="9" height="6" viewBox="0 0 9 6"><path d="M1.400 4.800l3.100-3.100 3.100 3.100" fill="none" stroke="#cfcfcf" stroke-width="1.700"/></svg>
<svg class="abs" style="left:395px;top:626px" width="23" height="20" viewBox="0 0 23 20"><path d="M5 1h13a4 4 0 0 1 4 4v6a4 4 0 0 1-4 4h-8.500l-4.500 4.300v-4.300a4 4 0 0 1-4-4v-6a4 4 0 0 1 4-4z" fill="#cfcfcf"/></svg>
<svg class="abs" style="left:435.5px;top:632.2px" width="9" height="6" viewBox="0 0 9 6"><path d="M1.400 4.800l3.100-3.100 3.100 3.100" fill="none" stroke="#cfcfcf" stroke-width="1.700"/></svg>
<svg class="abs" style="left:511px;top:627px" width="24" height="18" viewBox="0 0 24 18"><rect x="0" y="0" width="24" height="18" rx="3.500" fill="#28d95e"/><path d="M12 13.500v-8M8.500 8.500l3.500-3.500 3.500 3.500" fill="none" stroke="#10301a" stroke-width="1.900"/></svg>
<svg class="abs" style="left:622px;top:625px" width="22" height="22" viewBox="0 0 22 22"><circle cx="11" cy="11" r="9.500" fill="none" stroke="#cfcfcf" stroke-width="1.500"/><circle cx="11" cy="11" r="6.800" fill="#cfcfcf"/></svg>
<svg class="abs" style="left:703px;top:623px" width="24" height="24" viewBox="0 0 24 24"><circle cx="11" cy="13.500" r="9" fill="#cfcfcf"/><circle cx="19.500" cy="4.500" r="4.500" fill="#1a1a1a"/><path d="M19.500 1.500v6M16.500 4.500h6" stroke="#cfcfcf" stroke-width="1.500"/><circle cx="8" cy="11.500" r="1.200" fill="#1a1a1a"/><circle cx="14" cy="11.500" r="1.200" fill="#1a1a1a"/><path d="M6.800 15.500c2 3 6.400 3 8.400 0" fill="none" stroke="#1a1a1a" stroke-width="1.400"/></svg>
<svg class="abs" style="left:789px;top:627px" width="18" height="18" viewBox="0 0 18 18"><g fill="none" stroke="#cfcfcf" stroke-width="1.700"><path d="M1.500 7V4.500a3 3 0 0 1 3-3H9M16.500 10v3.500a3 3 0 0 1-3 3H9"/><circle cx="13.800" cy="4.200" r="2.600"/><circle cx="4.200" cy="13.800" r="2.600"/></g></svg>
<svg class="abs" style="left:893px;top:626px" width="22" height="19" viewBox="0 0 22 19"><path d="M8 15.500H4a2.500 2.500 0 0 1-2.500-2.500V4.500A2.500 2.500 0 0 1 4 2h13a2.500 2.500 0 0 1 2.500 2.500v7" fill="none" stroke="#cfcfcf" stroke-width="1.700"/><rect x="9.500" y="13.200" width="11" height="3.800" rx="1.900" fill="#cfcfcf"/></svg>
<svg class="abs" style="left:1003px;top:625px" width="20" height="23" viewBox="0 0 20 23"><rect x="3.500" y="1.800" width="13" height="17.500" rx="2.500" fill="none" stroke="#cfcfcf" stroke-width="1.600"/><path d="M1.500 5.500h3M1.500 9h3M1.500 12.500h3M1.500 16h3" stroke="#cfcfcf" stroke-width="1.300"/><path d="M7.500 6.500h6.500M7.500 9.500h6.500M7.500 12.500h4" stroke="#cfcfcf" stroke-width="1.200"/><rect x="8" y="17.500" width="11" height="3.800" rx="1.900" fill="#cfcfcf" stroke="#1a1a1a" stroke-width=".8"/></svg>
<div class="abs" style="left:1106.2px;top:634.200px;width:3.600px;height:3.600px;border-radius:2px;background:#cfcfcf"></div>
<div class="abs" style="left:1114.2px;top:634.200px;width:3.600px;height:3.600px;border-radius:2px;background:#cfcfcf"></div>
<div class="abs" style="left:1122.2px;top:634.200px;width:3.600px;height:3.600px;border-radius:2px;background:#cfcfcf"></div>
<div class="abs" style="left:1206.500px;top:631.500px;width:61.500px;height:27px;border-radius:6.500px;background:#c62828"></div>
<div class="abs" style="left:0;top:672px;width:1280px;height:48px;background:linear-gradient(90deg,#eceef8 0%,#edeff8 22%,#eff0f6 40%,#efeff3 52%,#ecefe9 58%,#eaf0e6 63%,#f1eeee 70%,#f3ecef 74%,#e0efe9 79%,#deefe9 82%,#f0e9e4 87%,#f5e5e0 91%,#f2e9e4 96%,#efece8 100%);border-top:1px solid rgba(0,0,0,.10)"></div>
<svg class="abs" style="left:19px;top:677px" width="30" height="30" viewBox="0 0 30 30"><path d="M12 12.500L22.500 27.500a1 1 0 0 1-.8 1.500H2.300a1 1 0 0 1-.8-1.500z" fill="#f6c81e"/><path d="M12 10.500c.8 0 1.500.6 2 1.500l9 14.500c.5 1-.2 2-1.300 2H2.300c-1.100 0-1.800-1-1.300-2l9-14.500c.5-.9 1.200-1.500 2-1.500z" fill="#f6c81e"/><rect x="11.200" y="16" width="1.800" height="6.500" fill="#3a2a00"/><rect x="11.200" y="24" width="1.800" height="1.900" fill="#3a2a00"/><circle cx="19" cy="9" r="8" fill="#c42b1c"/><text x="19" y="13" font-family="Liberation Sans" font-size="11" font-weight="bold" fill="#fff" text-anchor="middle">1</text></svg>
<svg class="abs" style="left:183px;top:685px" width="24" height="23" viewBox="0 0 24 23"><defs><linearGradient id="wl" x1="0" y1="0" x2="1" y2="1"><stop offset="0" stop-color="#5fd0fb"/><stop offset="1" stop-color="#0a6fd6"/></linearGradient></defs><rect x="0" y="0" width="11.400" height="11" fill="url(#wl)"/><rect x="12.600" y="0" width="11.400" height="11" fill="url(#wl)"/><rect x="0" y="12" width="11.400" height="11" fill="url(#wl)"/><rect x="12.600" y="12" width="11.400" height="11" fill="url(#wl)"/></svg>
<div class="abs" style="left:221px;top:680.500px;width:218px;height:31px;border-radius:15.500px;background:#f9fafd;border:1px solid #dcdee6;box-shadow:0 1px 1px rgba(0,0,0,.08)"></div>
<svg class="abs" style="left:231px;top:688px" width="17" height="17" viewBox="0 0 17 17"><circle cx="7" cy="7" r="5" fill="none" stroke="#222" stroke-width="1.500"/><path d="M10.800 10.800l4.200 4.200" stroke="#222" stroke-width="1.700" stroke-linecap="round"/></svg>
<svg class="abs" style="left:388px;top:682px" width="51" height="29" viewBox="0 0 51 29"><defs><clipPath id="pc"><path d="M0 0h35.500a15 15 0 0 1 0 29H0z"/></clipPath></defs><g clip-path="url(#pc)"><ellipse cx="26" cy="23.500" rx="25" ry="4.200" fill="#3b9bdc"/><ellipse cx="24" cy="23" rx="19" ry="3.200" fill="#8a8d92"/><path d="M10 4c0-3.500 8-4.500 9.500 0 1 3 1 6 4 8 5 3 12 3 15 7 1.500 2-2 3.500-5 3.500H16c-4 0-5-3-4-6 1-3-2-8-2-12.500z" fill="#d9cfb6"/><path d="M34 17c4-1 8 0 10 3-3 1-7 1-10-.5z" fill="#cfc4a8"/><path d="M14 14c2 3 6 6 12 7" stroke="#c4b99c" stroke-width="1" fill="none"/><circle cx="12.500" cy="5" r=".9" fill="#222"/><circle cx="16.500" cy="5" r=".9" fill="#222"/><ellipse cx="14.300" cy="7.300" rx="1.300" ry=".8" fill="#444"/></g></svg>
<div class="abs" style="left:458px;top:685px;width:17px;height:15.500px;border-radius:2px;background:linear-gradient(135deg,#fafafa,#cfcfcf)"></div>
<div class="abs" style="left:452px;top:690px;width:18px;height:17px;border-radius:2px;background:#1f1f1f"></div>
<div class="abs" style="left:458px;top:690px;width:12px;height:10.500px;background:linear-gradient(135deg,#bdbdbd,#8d8d8d)"></div>
<svg class="abs" style="left:495px;top:683px" width="26" height="26" viewBox="0 0 26 26"><defs><linearGradient id="tc" x1="0" y1="0" x2="1" y2="1"><stop offset="0" stop-color="#8b7bf0"/><stop offset="1" stop-color="#4f52c8"/></linearGradient></defs><path d="M13 1a11.500 11.500 0 1 1-6 21.300L2 24l1.200-5A11.500 11.500 0 0 1 13 1z" fill="url(#tc)"/><rect x="6.500" y="8.500" width="9" height="8" rx="1.800" fill="#fff"/><path d="M16 11.500l3.500-2.300v6.600l-3.500-2.300z" fill="#fff"/></svg>
<svg class="abs" style="left:539px;top:684px" width="26" height="24" viewBox="0 0 26 24"><path d="M1 3a1.500 1.500 0 0 1 1.500-1.500h6.500l2.500 2.500H23.500a1.500 1.500 0 0 1 1.500 1.500V21a1.500 1.500 0 0 1-1.500 1.500h-21A1.500 1.500 0 0 1 1 21z" fill="#f0a928"/><path d="M1 7.500A1.500 1.500 0 0 1 2.500 6h21A1.500 1.500 0 0 1 25 7.500V21a1.500 1.500 0 0 1-1.500 1.500h-21A1.500 1.500 0 0 1 1 21z" fill="#ffd04c"/><path d="M5 17.500A2.500 2.500 0 0 1 7.500 15h11a2.500 2.500 0 0 1 2.500 2.500v5H5z" fill="#1b8de0"/><rect x="9" y="17.800" width="8" height="1.600" rx=".8" fill="#0c5fa8"/></svg>
<svg class="abs" style="left:583px;top:683px" width="26" height="25" viewBox="0 0 26 25"><path d="M1 10L13 1.500 25 10v13.500H1z" fill="#0f6fc9"/><path d="M3.500 8.500h19V18h-19z" fill="#fff"/><path d="M1 10l12 7.500L25 10v13.500H1z" fill="#2f9bea"/><path d="M1 23.500L13 14l12 9.500z" fill="#1b84dc"/></svg>
<svg class="abs" style="left:627px;top:683px" width="26" height="26" viewBox="0 0 26 26"><defs><linearGradient id="eg" x1="0" y1="1" x2="1" y2="0"><stop offset="0" stop-color="#0b57a6"/><stop offset=".5" stop-color="#1a9ad6"/><stop offset="1" stop-color="#5fe07a"/></linearGradient></defs><circle cx="13" cy="13" r="12" fill="url(#eg)"/><path d="M13.500 8c-4 0-6.500 3-6.500 6.500 0 4 3.300 7.500 8 7.500 3 0 5.500-1.200 7-3-2 .8-4.500.6-6-.5-2-1.400-2.300-4-1-5.500 1.200-1.400 3.500-1 4.500 0 0-3-2.500-5-6-5z" fill="#eaf4fb"/><path d="M1.500 15C2 9.500 6.500 5.500 12 5.500c4.500 0 8.500 2.500 9 6.500-1.500-2.500-4.500-4-7.500-4C8 8 3.500 11 1.500 15z" fill="#1467b3" opacity=".55"/></svg>
<svg class="abs" style="left:671px;top:683px" width="25" height="26" viewBox="0 0 25 26"><path d="M7.500 5.500V4a2.500 2.500 0 0 1 2.500-2.500h5A2.500 2.500 0 0 1 17.500 4v1.500" fill="none" stroke="#2b7cd3" stroke-width="1.600"/><rect x="1" y="4.500" width="23" height="20.500" rx="2.500" fill="#13508f"/><rect x="7" y="9.500" width="5" height="5" fill="#f25022"/><rect x="13" y="9.500" width="5" height="5" fill="#7fba00"/><rect x="7" y="15.500" width="5" height="5" fill="#00a4ef"/><rect x="13" y="15.500" width="5" height="5" fill="#ffb900"/></svg>
<div class="abs" style="left:716px;top:683.500px;width:24px;height:24px;border-radius:12px;background:radial-gradient(circle at 40% 35%,#f9b04a,#ee8a1d)"></div>
<svg class="abs" style="left:760px;top:679px" width="32" height="30" viewBox="0 0 32 30"><circle cx="12" cy="17" r="11" fill="#2aa3dc"/><path d="M5.500 16.500l12-5c.7-.3 1.200.2 1 1l-2 9.500c-.1.700-.7.900-1.300.5l-3-2.200-1.600 1.500c-.3.300-.7.200-.7-.3l.2-2.700 5-4.600-6.300 3.900-2.900-.9c-.6-.2-.6-.5-.4-.7z" fill="#fff"/><circle cx="22" cy="9.500" r="8" fill="#e5333a"/><text x="22" y="13.300" font-family="Liberation Sans" font-size="10" fill="#fff" text-anchor="middle">40</text></svg>
<svg class="abs" style="left:803px;top:678px" width="32" height="31" viewBox="0 0 32 31"><circle cx="12.500" cy="18" r="12" fill="#fff"/><path d="M12.500 18L2.100 12A12 12 0 0 1 22.900 12z" fill="#e33b2e"/><path d="M12.500 18L22.900 12A12 12 0 0 1 12.500 30z" fill="#fcc934"/><path d="M12.500 18L12.500 30A12 12 0 0 1 2.100 12z" fill="#2da44e"/><circle cx="12.500" cy="18" r="5.500" fill="#fff"/><circle cx="12.500" cy="18" r="4.300" fill="#3b7de9"/><circle cx="22.500" cy="8.700" r="7.800" fill="#fff" stroke="#bbb" stroke-width=".6"/><circle cx="22.500" cy="8.700" r="6.800" fill="#e8e4de"/><ellipse cx="22.500" cy="6.500" rx="3.600" ry="3.900" fill="#3a2a22"/><ellipse cx="22.500" cy="8" rx="2.400" ry="3" fill="#e8c0a8"/><path d="M17.500 13.500c1.500-2.500 8.500-2.500 10 0a6.800 6.800 0 0 1-10 0z" fill="#5a4a44"/></svg>
<div class="abs" style="left:841px;top:678px;width:38px;height:37px;border-radius:4px;background:rgba(255,255,255,.55);border:1px solid rgba(0,0,0,.04)"></div>
<div class="abs" style="left:848px;top:683.500px;width:24px;height:24px;border-radius:9px;background:#0b5cff"></div>
<div class="abs" style="left:852px;top:712.500px;width:16px;height:3px;border-radius:1.500px;background:#1a6fc9"></div>
<svg class="abs" style="left:892px;top:683px" width="25" height="27" viewBox="0 0 25 27"><path d="M12.500 1C6 1 2 4 2 11c0 4 1.500 7 4.500 8.500V25l4-4c.7.100 1.300.1 2 .1 6.500 0 10.500-3 10.500-10S19 1 12.500 1z" fill="#7b5cf0"/><path d="M8.500 6.500c.5-.5 1.300-.4 1.700.2l1 1.600c.3.500.2 1.100-.2 1.500l-.6.600c.6 1.500 1.800 2.700 3.300 3.300l.6-.6c.4-.4 1-.5 1.500-.2l1.600 1c.6.400.7 1.200.2 1.700l-.8.800c-.6.600-1.500.8-2.300.5-3.600-1.300-6.400-4.100-7.700-7.700-.3-.8-.1-1.700.5-2.300z" fill="#fff"/><path d="M13 5.500a5 5 0 0 1 5 5M13 7.800a2.800 2.800 0 0 1 2.800 2.800" fill="none" stroke="#fff" stroke-width=".9"/></svg>
<svg class="abs" style="left:936px;top:684px" width="24" height="23" viewBox="0 0 24 23"><rect x="8" y="2" width="15" height="19" rx="1.500" fill="#ed6c47"/><rect x="13" y="5" width="8" height="5.500" fill="#fbe3da"/><path d="M13 13h8M13 15.500h8M13 18h8" stroke="#fbe3da" stroke-width="1"/><path d="M1 3.500l13-2.500v21l-13-2.500z" fill="#d24726"/><text x="7.300" y="16" font-family="Liberation Sans" font-size="11.500" font-weight="bold" fill="#fff" text-anchor="middle">P</text></svg>
<div class="abs" style="left:550px;top:712.500px;width:5px;height:2.500px;border-radius:1.200px;background:#8a8a8a"></div>
<div class="abs" style="left:637.5px;top:712.500px;width:5px;height:2.500px;border-radius:1.200px;background:#8a8a8a"></div>
<div class="abs" style="left:769.5px;top:712.500px;width:5px;height:2.500px;border-radius:1.200px;background:#8a8a8a"></div>
<div class="abs" style="left:813.5px;top:712.500px;width:5px;height:2.500px;border-radius:1.200px;background:#8a8a8a"></div>
<div class="abs" style="left:901.5px;top:712.500px;width:5px;height:2.500px;border-radius:1.200px;background:#8a8a8a"></div>
<div class="abs" style="left:945.5px;top:712.500px;width:5px;height:2.500px;border-radius:1.200px;background:#8a8a8a"></div>
<svg class="abs" style="left:993px;top:691.500px" width="12" height="8" viewBox="0 0 12 8"><path d="M1 6.500l5-5 5 5" fill="none" stroke="#222" stroke-width="1.500"/></svg>
<svg class="abs" style="left:1024px;top:687px" width="13" height="17" viewBox="0 0 13 17"><rect x="4" y="1" width="5" height="9.500" rx="2.500" fill="#cfe0fa" stroke="#2b6ed8" stroke-width="1.200"/><path d="M1.500 8a5 5 0 0 0 10 0M6.500 13v3" fill="none" stroke="#2b6ed8" stroke-width="1.200"/></svg>
<svg class="abs" style="left:1097.500px;top:688px" width="18" height="15" viewBox="0 0 18 15"><g fill="none" stroke="#1b1b1b" stroke-width="1.400"><path d="M1 5.500a11.500 11.500 0 0 1 16 0"/><path d="M3.800 8.300a7.500 7.500 0 0 1 10.400 0"/><path d="M6.500 11a3.700 3.700 0 0 1 5 0"/></g><circle cx="9" cy="13" r="1.300" fill="#1b1b1b"/></svg>
<svg class="abs" style="left:1122px;top:689px" width="16" height="14" viewBox="0 0 16 14"><path d="M1 5h2.500l3.500-3.500v11L3.500 9H1z" fill="none" stroke="#1b1b1b" stroke-width="1.100"/><path d="M9.500 4.500a3.500 3.500 0 0 1 0 5M11.500 2.500a6 6 0 0 1 0 9" fill="none" stroke="#1b1b1b" stroke-width="1.100"/><path d="M13.300 1a8 8 0 0 1 0 12" fill="none" stroke="#9a9a9a" stroke-width="1"/></svg>
<svg class="abs" style="left:1145.500px;top:691px" width="18" height="10" viewBox="0 0 18 10"><rect x="0.700" y="0.700" width="14" height="8.600" rx="2" fill="none" stroke="#1b1b1b" stroke-width="1.200"/><rect x="2.600" y="2.600" width="7" height="4.800" rx=".6" fill="#1b1b1b"/><path d="M16 3.500v3" stroke="#1b1b1b" stroke-width="1.600" stroke-linecap="round"/></svg>
<svg class="abs" style="left:1244px;top:688px" width="16" height="17" viewBox="0 0 16 17"><path d="M8 1c3 0 5 2.300 5 5.200v3l1.700 2.500c.3.500 0 1.100-.6 1.100H1.900c-.6 0-.9-.6-.6-1.100L3 9.200v-3C3 3.300 5 1 8 1z" fill="#1f62d2"/><path d="M6 14h4a2 2 0 0 1-4 0z" fill="#1f62d2"/></svg>
<span class="tx" style="left:292px;top:146.44px;font:normal normal 6.11px/7.33px 'Liberation Sans','DejaVu Sans',sans-serif;color:#fff;">якість ОП АГ Бак + [Режим ограниченной функциональности]  -  Word</span>
<span class="tx" style="left:606px;top:146.53px;font:normal normal 5.94px/7.13px 'Liberation Sans','DejaVu Sans',sans-serif;color:#fff;">Максим Колесников</span>
<span class="tx" style="left:14px;top:163.02px;font:normal normal 5.97px/7.16px 'Liberation Sans','DejaVu Sans',sans-serif;color:#fff;letter-spacing:-0.168px;">Файл</span>
<span class="tx" style="left:41px;top:163.02px;font:normal normal 5.97px/7.16px 'Liberation Sans','DejaVu Sans',sans-serif;color:#2b579a;letter-spacing:0.043px;">Главная</span>
<span class="tx" style="left:74px;top:163.02px;font:normal normal 5.97px/7.16px 'Liberation Sans','DejaVu Sans',sans-serif;color:#fff;letter-spacing:-0.024px;">Вставка</span>
<span class="tx" style="left:106px;top:163.02px;font:normal normal 5.97px/7.16px 'Liberation Sans','DejaVu Sans',sans-serif;color:#fff;">Рисование</span>
<span class="tx" style="left:147px;top:163.02px;font:normal normal 5.97px/7.16px 'Liberation Sans','DejaVu Sans',sans-serif;color:#fff;letter-spacing:0.09px;">Конструктор</span>
<span class="tx" style="left:193px;top:163.02px;font:normal normal 5.97px/7.16px 'Liberation Sans','DejaVu Sans',sans-serif;color:#fff;letter-spacing:0.023px;">Макет</span>
<span class="tx" style="left:221px;top:163.02px;font:normal normal 5.97px/7.16px 'Liberation Sans','DejaVu Sans',sans-serif;color:#fff;">Ссылки</span>
<span class="tx" style="left:252px;top:163.02px;font:normal normal 5.97px/7.16px 'Liberation Sans','DejaVu Sans',sans-serif;color:#fff;letter-spacing:-0.095px;">Рассылки</span>
<span class="tx" style="left:288px;top:163.02px;font:normal normal 5.97px/7.16px 'Liberation Sans','DejaVu Sans',sans-serif;color:#fff;letter-spacing:0.14px;">Рецензирование</span>
<span class="tx" style="left:347px;top:163.02px;font:normal normal 5.97px/7.16px 'Liberation Sans','DejaVu Sans',sans-serif;color:#fff;letter-spacing:-0.264px;">Вид</span>
<span class="tx" style="left:368px;top:163.02px;font:normal normal 5.97px/7.16px 'Liberation Sans','DejaVu Sans',sans-serif;color:#fff;letter-spacing:0.086px;">Справка</span>
<span class="tx" style="left:402px;top:163.02px;font:normal normal 5.97px/7.16px 'Liberation Sans','DejaVu Sans',sans-serif;color:#fff;letter-spacing:-0.204px;">ABBYY FineReader 12</span>
<span class="tx" style="left:470px;top:163.02px;font:normal normal 5.97px/7.16px 'Liberation Sans','DejaVu Sans',sans-serif;color:#fff;letter-spacing:0.064px;">Acrobat</span>
<span class="tx" style="left:516px;top:163.02px;font:normal normal 5.97px/7.16px 'Liberation Sans','DejaVu Sans',sans-serif;color:#fff;letter-spacing:-0.042px;">Что вы хотите сделать?</span>
<span class="tx" style="left:731px;top:163.02px;font:normal normal 5.97px/7.16px 'Liberation Sans','DejaVu Sans',sans-serif;color:#fff;letter-spacing:0.108px;">Поделиться</span>
<span class="tx" style="left:11px;top:194.7px;font:normal normal 5.67px/6.8px 'Liberation Sans','DejaVu Sans',sans-serif;color:#333;">Вставить</span>
<span class="tx" style="left:48px;top:178.06px;font:normal normal 5.91px/7.09px 'Liberation Sans','DejaVu Sans',sans-serif;color:#b4b4b4;letter-spacing:-0.033px;">Вырезать</span>
<span class="tx" style="left:48px;top:189.56px;font:normal normal 5.91px/7.09px 'Liberation Sans','DejaVu Sans',sans-serif;color:#b4b4b4;letter-spacing:0.122px;">Копировать</span>
<span class="tx" style="left:48px;top:201.06px;font:normal normal 5.91px/7.09px 'Liberation Sans','DejaVu Sans',sans-serif;color:#333;letter-spacing:0.122px;">Формат по образцу</span>
<span class="tx" style="left:36px;top:213.1px;font:normal normal 5.16px/6.19px 'Liberation Sans','DejaVu Sans',sans-serif;color:#555;">Буфер обмена</span>
<span class="tx" style="left:116px;top:182.47px;font:normal normal 5.71px/6.85px 'Liberation Sans','DejaVu Sans',sans-serif;color:#333;">Times New R</span>
<span class="tx" style="left:162.5px;top:182.39px;font:normal normal 5.85px/7.02px 'Liberation Sans','DejaVu Sans',sans-serif;color:#333;">14</span>
<span class="tx" style="left:190px;top:182.2px;font:normal normal 6.5px/7.8px 'Liberation Sans','DejaVu Sans',sans-serif;color:#444;">A</span>
<span class="tx" style="left:195px;top:180.2px;font:normal normal 4px/4.8px 'Liberation Sans','DejaVu Sans',sans-serif;color:#444;">ˆ</span>
<span class="tx" style="left:201px;top:182.92px;font:normal normal 5.8px/6.96px 'Liberation Sans','DejaVu Sans',sans-serif;color:#444;">A</span>
<span class="tx" style="left:206px;top:180.2px;font:normal normal 4px/4.8px 'Liberation Sans','DejaVu Sans',sans-serif;color:#444;">ˇ</span>
<span class="tx" style="left:215px;top:182.17px;font:normal normal 6.54px/7.85px 'Liberation Sans','DejaVu Sans',sans-serif;color:#444;">Aa</span>
<span class="tx" style="left:117px;top:196.58px;font:normal bold 7.2px/8.64px 'Liberation Sans','DejaVu Sans',sans-serif;color:#333;">Ж</span>
<span class="tx" style="left:129px;top:196.94px;font:italic bold 6.6px/7.92px 'Liberation Sans','DejaVu Sans',sans-serif;color:#333;">К</span>
<span class="tx" style="left:139.3px;top:196.94px;font:normal normal 6.6px/7.92px 'Liberation Sans','DejaVu Sans',sans-serif;color:#333;">Ч</span>
<span class="tx" style="left:155px;top:197.75px;font:normal normal 5.59px/6.71px 'Liberation Sans','DejaVu Sans',sans-serif;color:#555;">abc</span>
<span class="tx" style="left:168px;top:197.62px;font:normal normal 5.8px/6.96px 'Liberation Sans','DejaVu Sans',sans-serif;color:#444;">x</span>
<span class="tx" style="left:172px;top:201.18px;font:normal normal 3.2px/3.84px 'Liberation Sans','DejaVu Sans',sans-serif;color:#444;">2</span>
<span class="tx" style="left:179px;top:197.62px;font:normal normal 5.8px/6.96px 'Liberation Sans','DejaVu Sans',sans-serif;color:#444;">x</span>
<span class="tx" style="left:183px;top:196.68px;font:normal normal 3.2px/3.84px 'Liberation Sans','DejaVu Sans',sans-serif;color:#444;">2</span>
<span class="tx" style="left:194.5px;top:196.7px;font:normal normal 6.5px/7.8px 'Liberation Sans','DejaVu Sans',sans-serif;color:#c9c9c9;">A</span>
<span class="tx" style="left:228.5px;top:196.2px;font:normal normal 6.5px/7.8px 'Liberation Sans','DejaVu Sans',sans-serif;color:#444;">A</span>
<span class="tx" style="left:167px;top:213.1px;font:normal normal 5.16px/6.19px 'Liberation Sans','DejaVu Sans',sans-serif;color:#555;">Шрифт</span>
<span class="tx" style="left:350.5px;top:182.2px;font:normal normal 6.5px/7.8px 'Liberation Sans','DejaVu Sans',sans-serif;color:#555;">¶</span>
<span class="tx" style="left:294px;top:213.1px;font:normal normal 5.16px/6.19px 'Liberation Sans','DejaVu Sans',sans-serif;color:#555;letter-spacing:0.105px;">Абзац</span>
<span class="tx" style="left:370.5px;top:182.94px;font:normal normal 6.76px/8.11px 'Liberation Serif','DejaVu Serif',serif;color:#222;">АаБбВвГг</span>
<span class="tx" style="left:370.5px;top:197px;font:normal normal 5.17px/6.2px 'Liberation Sans','DejaVu Sans',sans-serif;color:#666;">¶ Table Pa...</span>
<span class="tx" style="left:407px;top:182.87px;font:normal normal 6.88px/8.26px 'Liberation Serif','DejaVu Serif',serif;color:#222;">АаБбВвГг</span>
<span class="tx" style="left:407px;top:196.64px;font:normal normal 5.77px/6.92px 'Liberation Sans','DejaVu Sans',sans-serif;color:#666;">¶ Без инт...</span>
<span class="tx" style="left:443.5px;top:181.16px;font:normal bold 9.74px/11.69px 'Liberation Serif','DejaVu Serif',serif;color:#222;">АаБбВ</span>
<span class="tx" style="left:443.5px;top:196.91px;font:normal normal 5.32px/6.38px 'Liberation Sans','DejaVu Sans',sans-serif;color:#666;">¶ Заголов...</span>
<span class="tx" style="left:479px;top:182.74px;font:normal normal 7.11px/8.53px 'Liberation Serif','DejaVu Serif',serif;color:#222;">АаБбВвГг</span>
<span class="tx" style="left:479px;top:196.66px;font:normal normal 5.74px/6.89px 'Liberation Sans','DejaVu Sans',sans-serif;color:#666;">¶ Обычный</span>
<span class="tx" style="left:515px;top:181.49px;font:normal normal 9.18px/11.02px 'Liberation Serif','DejaVu Serif',serif;color:#222;">АаБбВв</span>
<span class="tx" style="left:515px;top:196.58px;font:normal normal 5.87px/7.04px 'Liberation Sans','DejaVu Sans',sans-serif;color:#666;">¶ Основн...</span>
<span class="tx" style="left:551px;top:182.82px;font:italic bold 7.96px/9.55px 'Liberation Sans','DejaVu Sans',sans-serif;color:#222;">АаБбВе</span>
<span class="tx" style="left:551px;top:196.56px;font:normal normal 5.89px/7.07px 'Liberation Sans','DejaVu Sans',sans-serif;color:#666;">Заголово...</span>
<span class="tx" style="left:470px;top:213.1px;font:normal normal 5.16px/6.19px 'Liberation Sans','DejaVu Sans',sans-serif;color:#555;letter-spacing:-0.172px;">Стили</span>
<span class="tx" style="left:614px;top:178.06px;font:normal normal 5.91px/7.09px 'Liberation Sans','DejaVu Sans',sans-serif;color:#333;letter-spacing:0.031px;">Найти</span>
<span class="tx" style="left:614px;top:189.56px;font:normal normal 5.91px/7.09px 'Liberation Sans','DejaVu Sans',sans-serif;color:#333;letter-spacing:-0.065px;">Заменить</span>
<span class="tx" style="left:614px;top:201.06px;font:normal normal 5.91px/7.09px 'Liberation Sans','DejaVu Sans',sans-serif;color:#333;letter-spacing:-0.154px;">Выделить</span>
<span class="tx" style="left:606px;top:213.1px;font:normal normal 5.16px/6.19px 'Liberation Sans','DejaVu Sans',sans-serif;color:#555;letter-spacing:-0.091px;">Редактирование</span>
<span class="tx" style="left:658px;top:194.56px;font:normal normal 5.91px/7.09px 'Liberation Sans','DejaVu Sans',sans-serif;color:#333;letter-spacing:-0.027px;">Создать и поделиться</span>
<span class="tx" style="left:673px;top:202.86px;font:normal normal 5.91px/7.09px 'Liberation Sans','DejaVu Sans',sans-serif;color:#333;letter-spacing:-0.168px;">Adobe PDF</span>
<span class="tx" style="left:720px;top:194.56px;font:normal normal 5.91px/7.09px 'Liberation Sans','DejaVu Sans',sans-serif;color:#333;letter-spacing:0.041px;">Запросить</span>
<span class="tx" style="left:723px;top:202.86px;font:normal normal 5.91px/7.09px 'Liberation Sans','DejaVu Sans',sans-serif;color:#333;letter-spacing:0.209px;">подписи</span>
<span class="tx" style="left:686px;top:213.1px;font:normal normal 5.16px/6.19px 'Liberation Sans','DejaVu Sans',sans-serif;color:#555;letter-spacing:0.166px;">Adobe Acrobat</span>
<span class="tx" style="left:300.6px;top:294.57px;font:normal bold 6.21px/7.45px 'Liberation Sans','DejaVu Sans',sans-serif;color:#222;letter-spacing:-0.068px;">3С курс</span>
<span class="tx" style="left:300.6px;top:303.8px;font:normal normal 5.67px/6.8px 'Liberation Sans','DejaVu Sans',sans-serif;color:#9a9a9a;">5,1%</span>
<span class="tx" style="left:300.6px;top:313.57px;font:normal bold 6.21px/7.45px 'Liberation Sans','DejaVu Sans',sans-serif;color:#222;">4 курс</span>
<span class="tx" style="left:300.6px;top:322.8px;font:normal normal 5.67px/6.8px 'Liberation Sans','DejaVu Sans',sans-serif;color:#9a9a9a;letter-spacing:-0.131px;">19,2%</span>
<span class="tx" style="left:300.6px;top:358.07px;font:normal bold 6.21px/7.45px 'Liberation Sans','DejaVu Sans',sans-serif;color:#222;letter-spacing:-0.068px;">2С курс</span>
<span class="tx" style="left:300.6px;top:367.8px;font:normal normal 5.67px/6.8px 'Liberation Sans','DejaVu Sans',sans-serif;color:#9a9a9a;">6,1%</span>
<span class="tx" style="left:300.6px;top:404.57px;font:normal bold 6.21px/7.45px 'Liberation Sans','DejaVu Sans',sans-serif;color:#222;">3 курс</span>
<span class="tx" style="left:300.6px;top:414.3px;font:normal normal 5.67px/6.8px 'Liberation Sans','DejaVu Sans',sans-serif;color:#9a9a9a;letter-spacing:-0.131px;">27,3%</span>
<span class="tx" style="left:494.5px;top:335.68px;font:normal bold 6.21px/7.45px 'Liberation Sans','DejaVu Sans',sans-serif;color:#222;">2 курс</span>
<span class="tx" style="left:497px;top:345.6px;font:normal normal 5.67px/6.8px 'Liberation Sans','DejaVu Sans',sans-serif;color:#9a9a9a;letter-spacing:0.069px;">42,4%</span>
<span class="tx" style="left:334px;top:433.06px;font:normal normal 8.24px/9.89px 'Liberation Serif','DejaVu Serif',serif;color:#333;">Рис. 1. </span>
<span class="tx" style="left:359.5px;top:432.88px;font:normal bold 8.54px/10.25px 'Liberation Serif','DejaVu Serif',serif;color:#222;">Контингент респондентів</span>
<span class="tx" style="left:460px;top:432.96px;font:italic normal 8.39px/10.07px 'Liberation Serif','DejaVu Serif',serif;color:#333;">(у відсотках)</span>
<span class="tx" style="left:268.75px;top:455.83px;font:normal normal 8.62px/10.34px 'Liberation Serif','DejaVu Serif',serif;color:#333;">Результати оцінювання здобувачами вищої освіти якості ОПП «Агрономія»</span>
<span class="tx" style="left:247.5px;top:467.44px;font:normal normal 8.44px/10.13px 'Liberation Serif','DejaVu Serif',serif;color:#333;">представлено у таблиці 1.</span>
<span class="tx" style="left:245px;top:494.99px;font:normal bold 8.36px/10.03px 'Liberation Serif','DejaVu Serif',serif;color:#222;letter-spacing:-0.119px;">Таблиця</span>
<span class="tx" style="left:288.5px;top:494.99px;font:normal bold 8.36px/10.03px 'Liberation Serif','DejaVu Serif',serif;color:#222;letter-spacing:-0.008px;">1-Оцінювання</span>
<span class="tx" style="left:353.5px;top:494.99px;font:normal bold 8.36px/10.03px 'Liberation Serif','DejaVu Serif',serif;color:#222;letter-spacing:0.057px;">здобувачами</span>
<span class="tx" style="left:412.5px;top:494.99px;font:normal bold 8.36px/10.03px 'Liberation Serif','DejaVu Serif',serif;color:#222;letter-spacing:0.126px;">вищої</span>
<span class="tx" style="left:446.5px;top:494.99px;font:normal bold 8.36px/10.03px 'Liberation Serif','DejaVu Serif',serif;color:#222;letter-spacing:-0.021px;">освіти</span>
<span class="tx" style="left:480.5px;top:494.99px;font:normal bold 8.36px/10.03px 'Liberation Serif','DejaVu Serif',serif;color:#222;letter-spacing:0.078px;">якості</span>
<span class="tx" style="left:514.5px;top:494.99px;font:normal bold 8.36px/10.03px 'Liberation Serif','DejaVu Serif',serif;color:#222;">ОПП</span>
<span class="tx" style="left:292.5px;top:506.38px;font:normal bold 7.69px/9.23px 'Liberation Serif','DejaVu Serif',serif;color:#222;">«Агрономія»</span>
<span class="tx" style="left:344px;top:506.34px;font:italic normal 8.27px/9.92px 'Liberation Serif','DejaVu Serif',serif;color:#333;">(у відсотках)</span>
<span class="tx" style="left:247.8px;top:522.5px;font:normal normal 8px/9.6px 'Liberation Serif','DejaVu Serif',serif;color:#333;letter-spacing:0.559px;">№</span>
<span class="tx" style="left:247.5px;top:532.62px;font:normal normal 7.8px/9.36px 'Liberation Serif','DejaVu Serif',serif;color:#333;letter-spacing:-0.141px;">з/п</span>
<span class="tx" style="left:282px;top:522.46px;font:normal normal 8.41px/10.09px 'Liberation Serif','DejaVu Serif',serif;color:#333;">Критерій оцінювання</span>
<span class="tx" style="left:480.5px;top:522.48px;font:normal normal 7.53px/9.04px 'Liberation Serif','DejaVu Serif',serif;color:#333;">Бали</span>
<span class="tx" style="left:438.6px;top:533px;font:normal bold 8px/9.6px 'Liberation Serif','DejaVu Serif',serif;color:#222;">5</span>
<span class="tx" style="left:462.5px;top:533px;font:normal bold 8px/9.6px 'Liberation Serif','DejaVu Serif',serif;color:#222;">4</span>
<span class="tx" style="left:486px;top:533px;font:normal bold 8px/9.6px 'Liberation Serif','DejaVu Serif',serif;color:#222;">3</span>
<span class="tx" style="left:509.5px;top:533px;font:normal bold 8px/9.6px 'Liberation Serif','DejaVu Serif',serif;color:#222;">2</span>
<span class="tx" style="left:533.6px;top:533px;font:normal bold 8px/9.6px 'Liberation Serif','DejaVu Serif',serif;color:#222;">1</span>
<span class="tx" style="left:10px;top:545.87px;font:normal normal 5.06px/6.07px 'Liberation Sans','DejaVu Sans',sans-serif;color:#555;">Страница 1 из 6</span>
<span class="tx" style="left:58px;top:545.87px;font:normal normal 5.06px/6.07px 'Liberation Sans','DejaVu Sans',sans-serif;color:#555;">Число слов: 1477</span>
<span class="tx" style="left:125px;top:545.87px;font:normal normal 5.06px/6.07px 'Liberation Sans','DejaVu Sans',sans-serif;color:#555;letter-spacing:0.06px;">украинский</span>
<span class="tx" style="left:762px;top:545.87px;font:normal normal 5.06px/6.07px 'Liberation Sans','DejaVu Sans',sans-serif;color:#555;letter-spacing:-0.378px;">90%</span>
<span class="tx" style="left:10.5px;top:652.62px;font:normal normal 12.3px/14.76px 'Liberation Sans','DejaVu Sans',sans-serif;color:#cfcfcf;letter-spacing:0.037px;-webkit-text-stroke:0.28px #cfcfcf;">Включить звук</span>
<span class="tx" style="left:110px;top:652.62px;font:normal normal 12.3px/14.76px 'Liberation Sans','DejaVu Sans',sans-serif;color:#cfcfcf;letter-spacing:-0.05px;-webkit-text-stroke:0.28px #cfcfcf;">Остановить видео</span>
<span class="tx" style="left:314px;top:627.8px;font:normal normal 12px/14.4px 'Liberation Sans','DejaVu Sans',sans-serif;color:#cfcfcf;letter-spacing:-0.18px;">26</span>
<span class="tx" style="left:267.5px;top:652.62px;font:normal normal 12.3px/14.76px 'Liberation Sans','DejaVu Sans',sans-serif;color:#cfcfcf;letter-spacing:-0.083px;-webkit-text-stroke:0.28px #cfcfcf;">Участники</span>
<span class="tx" style="left:397.5px;top:652.62px;font:normal normal 12.3px/14.76px 'Liberation Sans','DejaVu Sans',sans-serif;color:#cfcfcf;letter-spacing:-0.302px;-webkit-text-stroke:0.28px #cfcfcf;">Чат</span>
<span class="tx" style="left:460px;top:652.62px;font:normal normal 12.3px/14.76px 'Liberation Sans','DejaVu Sans',sans-serif;color:#2fdc63;letter-spacing:-0.035px;-webkit-text-stroke:0.28px #2fdc63;">Демонстрация экрана</span>
<span class="tx" style="left:614px;top:652.62px;font:normal normal 12.3px/14.76px 'Liberation Sans','DejaVu Sans',sans-serif;color:#cfcfcf;letter-spacing:-0.31px;-webkit-text-stroke:0.28px #cfcfcf;">Запись</span>
<span class="tx" style="left:690px;top:652.62px;font:normal normal 12.3px/14.76px 'Liberation Sans','DejaVu Sans',sans-serif;color:#cfcfcf;letter-spacing:-0.074px;-webkit-text-stroke:0.28px #cfcfcf;">Реакции</span>
<span class="tx" style="left:762px;top:652.62px;font:normal normal 12.3px/14.76px 'Liberation Sans','DejaVu Sans',sans-serif;color:#cfcfcf;letter-spacing:0.155px;-webkit-text-stroke:0.28px #cfcfcf;">Приложения</span>
<span class="tx" style="left:852px;top:652.62px;font:normal normal 12.3px/14.76px 'Liberation Sans','DejaVu Sans',sans-serif;color:#cfcfcf;letter-spacing:0.134px;-webkit-text-stroke:0.28px #cfcfcf;">Доски сообщений</span>
<span class="tx" style="left:977px;top:652.62px;font:normal normal 12.3px/14.76px 'Liberation Sans','DejaVu Sans',sans-serif;color:#cfcfcf;letter-spacing:0.1px;-webkit-text-stroke:0.28px #cfcfcf;">Примечания</span>
<span class="tx" style="left:1070px;top:652.62px;font:normal normal 12.3px/14.76px 'Liberation Sans','DejaVu Sans',sans-serif;color:#cfcfcf;letter-spacing:0.191px;-webkit-text-stroke:0.28px #cfcfcf;">Дополнительно</span>
<span class="tx" style="left:1218.6px;top:637.7px;font:normal bold 12.5px/15px 'Liberation Sans','DejaVu Sans',sans-serif;color:#fff;letter-spacing:-0.841px;">Выйти</span>
<span class="tx" style="left:52px;top:681.38px;font:normal normal 12.03px/14.44px 'Liberation Sans','DejaVu Sans',sans-serif;color:#1b1b1b;">Weather alert</span>
<span class="tx" style="left:52px;top:697.28px;font:normal normal 11.86px/14.23px 'Liberation Sans','DejaVu Sans',sans-serif;color:#6a6a6a;">In effect</span>
<span class="tx" style="left:258px;top:687.56px;font:normal normal 14.07px/16.88px 'Liberation Sans','DejaVu Sans',sans-serif;color:#5a5a5a;">Поиск</span>
<span class="tx" style="left:721.5px;top:681.3px;font:normal normal 22px/26.4px 'Liberation Sans','DejaVu Sans',sans-serif;color:#fff;">a</span>
<span class="tx" style="left:851.5px;top:691.7px;font:normal bold 6.51px/7.81px 'Liberation Sans','DejaVu Sans',sans-serif;color:#fff;">zoom</span>
<span class="tx" style="left:1058px;top:690.5px;font:normal normal 10.49px/12.59px 'Liberation Sans','DejaVu Sans',sans-serif;color:#1b1b1b;">РУС</span>
<span class="tx" style="left:1207px;top:680.75px;font:normal normal 11.59px/13.91px 'Liberation Sans','DejaVu Sans',sans-serif;color:#1b1b1b;">09:09</span>
<span class="tx" style="left:1178.7px;top:697.03px;font:normal normal 11.62px/13.94px 'Liberation Sans','DejaVu Sans',sans-serif;color:#1b1b1b;">22.11.2023</span>

<!-- divider handle -->
<div class="abs" style="left:778.700px;top:334.300px;width:1.500px;height:25.500px;background:#8e8e8e"></div>
<div class="abs" style="left:781.700px;top:334.300px;width:1.500px;height:25.500px;background:#8e8e8e"></div>

<!-- GRID -->
<div class="abs navbtn" style="left:997px;top:82px"><svg class="abs" style="left:29px;top:12px" width="15" height="9" viewBox="0 0 15 9"><path d="M1 8l6.500-6.500L14 8" fill="none" stroke="#aaa" stroke-width="1.600"/></svg></div>
<div class="abs navbtn" style="left:997px;top:578px"><svg class="abs" style="left:29px;top:13px" width="15" height="9" viewBox="0 0 15 9"><path d="M1 1l6.500 6.500L14 1" fill="none" stroke="#aaa" stroke-width="1.600"/></svg></div>

<div id="grid">
<div class="abs tile" style="left:839.200px;top:122.400px"><div class="av"><svg width="80" height="80" viewBox="0 0 80 80"><defs><filter id="b1" x="-10%" y="-10%" width="120%" height="120%"><feGaussianBlur stdDeviation="0.8"/></filter><linearGradient id="h1" x1="0" y1="0" x2="0" y2="1"><stop offset="0" stop-color="#94703f"/><stop offset=".4" stop-color="#ad8654"/><stop offset="1" stop-color="#cfa970"/></linearGradient></defs>
<rect width="80" height="80" fill="#e3e3e3"/>
<g filter="url(#b1)">
<path d="M0 80V71c7-4 17-7 26-8 4 4 9 6 14 6s10-2 14-6c9 1 19 4 26 8v9z" fill="#1b2321"/>
<rect x="32" y="54" width="16" height="13" fill="#d8a68c"/>
<path d="M40 4.500C28 4.500 22 12 20 24c-2 12-3 26-5 38-1 8 3 14 9 14 5 0 7-6 7-12h18c0 6 3 12 8 12 6 0 10-6 9-14-2-12-3-26-5-38C59 12 52 4.500 40 4.500z" fill="url(#h1)"/>
<ellipse cx="39.500" cy="42" rx="16" ry="18.500" fill="#ebbfa8"/>
<path d="M22.500 32C22 18 30 10.500 40 10.500S58 18 57.500 32c-5-3-11-3.800-17.500-3.800S27.500 29 22.500 32z" fill="#a27a4a"/>
<path d="M30 12c3-2 7-3 10-3s7 1 10 3c-3 6-6 12-8 17h-6c-1-6-3-12-6-17z" fill="#b48c58" opacity=".7"/>
<ellipse cx="33" cy="33.500" rx="2.700" ry="1.200" fill="#4a382c"/><ellipse cx="46.500" cy="33.500" rx="2.700" ry="1.200" fill="#4a382c"/>
<path d="M29.500 31c2-1 5-1 7 0M43 31c2-1 5-1 7 0" stroke="#8a6a48" stroke-width=".9" fill="none"/>
<path d="M34.500 47c3 1.500 7.500 1.500 10.500 0-2 3-8.500 3-10.500 0z" fill="#c0606e"/>
<path d="M37.500 41c1.200 1 3.300 1 4.500 0" stroke="#cf9a82" stroke-width="1" fill="none"/>
<ellipse cx="28" cy="43" rx="3.500" ry="2.500" fill="#e6a898" opacity=".6"/><ellipse cx="51.500" cy="43" rx="3.500" ry="2.500" fill="#e6a898" opacity=".6"/>
</g></svg></div><div class="lbl"><svg class="mic" width="14" height="14" viewBox="0 0 14 14"><rect x="4.300" y="0.800" width="5.400" height="7.800" rx="2.700" fill="#ee5560"/><path d="M2.600 6.800a4.400 4.400 0 0 0 8.800 0" fill="none" stroke="#ee5560" stroke-width="1.400"/><path d="M7 11v1.800M4.300 12.900h5.400" fill="none" stroke="#ee5560" stroke-width="1.500"/><path d="M13.300 0.400L0.700 13.400" stroke="#262626" stroke-width="2.600"/><path d="M13.500 0.200L0.500 13.600" stroke="#ee5560" stroke-width="1.150"/></svg><span class="n" style="letter-spacing:0.014px">Зоя Білоусова</span></div></div>
<div class="abs tile" style="left:1037.200px;top:122.400px"><div class="av"><svg width="80" height="80" viewBox="0 0 80 80"><defs><filter id="b2" x="-10%" y="-10%" width="120%" height="120%"><feGaussianBlur stdDeviation="1.200"/></filter><filter id="b2b" x="-20%" y="-20%" width="140%" height="140%"><feGaussianBlur stdDeviation="3"/></filter><linearGradient id="y2" x1="0" y1="0" x2=".3" y2="1"><stop offset="0" stop-color="#e6cf3c"/><stop offset=".55" stop-color="#d9b822"/><stop offset="1" stop-color="#8a6c16"/></linearGradient></defs>
<rect width="80" height="80" fill="url(#y2)"/>
<g filter="url(#b2b)"><ellipse cx="68" cy="22" rx="14" ry="20" fill="#fff79a"/><ellipse cx="66" cy="54" rx="12" ry="9" fill="#f7e85e"/><ellipse cx="20" cy="10" rx="16" ry="8" fill="#efdc4a"/><ellipse cx="12" cy="66" rx="14" ry="10" fill="#6e5614"/></g>
<g filter="url(#b2)">
<path d="M0 66l16-4 18 3 22-1 24 5v11H0z" fill="#3a2612"/>
<path d="M26 68c7-3 17-2 25 0 7 2 14 4 22 5-9 4-33 5-47 1z" fill="#b9542a"/>
<path d="M40 70c5-1 10 0 14 2-5 1-10 1-14-2z" fill="#e87a3a"/>
<path d="M52 3c4-2 9 1 9 6 0 3-1 5-2 7 2 2 4 5 6 9l5 6 4 1c2 1 2 4 0 5l-4 1c-4-1-8-5-10-9-1 6-3 12-6 17 2 5 1 10-1 14l-7 5H27c-4-2-7-5-8-10-4 2-9 1-12-2 3-1 5-4 6-7-4-1-8-4-9-8 3 1 7 1 10-1-3-3-4-7-4-11 3 3 6 5 10 5 3-5 8-10 14-13 4-2 8-5 10-8 1-3 3-6 6-7z" fill="#2f2719"/>
<path d="M38 22c4-2 9-1 12 2l-3 10-8 4-4-8z" fill="#5a4a30"/>
<path d="M26 40c5-2 12 0 16 4l-4 10-10 2-6-8z" fill="#4a3c26"/>
<path d="M31 22c3-2 7-2 10 0l-1 7-7 3z" fill="#a22c22"/>
<path d="M34 30c3-1 6-1 8 1l-1 7-7-1z" fill="#74201a"/>
<path d="M66 27l5-3c2 0 3 2 3 4l-2 10-5 1z" fill="#6a5a30"/>
<path d="M66 37l6-1 1 8-6 2z" fill="#c8362c"/><path d="M66.500 40.500l6-1v3l-6 1z" fill="#f1e6da"/>
<path d="M8 30c4 2 8 2 12 0M4 44c4 1 8 0 12-2" stroke="#2a2216" stroke-width="2" fill="none"/>
</g></svg></div><div class="lbl"><svg class="mic" width="14" height="14" viewBox="0 0 14 14"><rect x="4.300" y="0.800" width="5.400" height="7.800" rx="2.700" fill="#ee5560"/><path d="M2.600 6.800a4.400 4.400 0 0 0 8.800 0" fill="none" stroke="#ee5560" stroke-width="1.400"/><path d="M7 11v1.800M4.300 12.900h5.400" fill="none" stroke="#ee5560" stroke-width="1.500"/><path d="M13.300 0.400L0.700 13.400" stroke="#262626" stroke-width="2.600"/><path d="M13.500 0.200L0.500 13.600" stroke="#ee5560" stroke-width="1.150"/></svg><span class="n" style="letter-spacing:0.154px">Илья Ющенко 31 Аг</span></div></div>
<div class="abs tile" style="left:839.200px;top:236.400px"><div class="big">Роговський&nbsp; Ми...</div><div class="lbl"><svg class="mic" width="14" height="14" viewBox="0 0 14 14"><rect x="4.300" y="0.800" width="5.400" height="7.800" rx="2.700" fill="#ee5560"/><path d="M2.600 6.800a4.400 4.400 0 0 0 8.800 0" fill="none" stroke="#ee5560" stroke-width="1.400"/><path d="M7 11v1.800M4.300 12.900h5.400" fill="none" stroke="#ee5560" stroke-width="1.500"/><path d="M13.300 0.400L0.700 13.400" stroke="#262626" stroke-width="2.600"/><path d="M13.500 0.200L0.500 13.600" stroke="#ee5560" stroke-width="1.150"/></svg><span class="n" style="letter-spacing:0.189px">Роговський Микита 32АГ</span></div></div>
<div class="abs tile" style="left:1037.200px;top:236.400px"><div class="av"><svg width="80" height="80" viewBox="0 0 80 80"><defs><filter id="b4" x="-10%" y="-10%" width="120%" height="120%"><feGaussianBlur stdDeviation="0.900"/></filter><filter id="cl4" x="0" y="0" width="100%" height="100%"><feTurbulence type="fractalNoise" baseFrequency="0.085 0.11" numOctaves="4" seed="11"/><feColorMatrix values="0 0 0 0 1  0 0 0 0 1  0 0 0 0 1  2.6 2.2 0 0 -2.25"/><feGaussianBlur stdDeviation="0.5"/></filter><radialGradient id="e4" cx=".42" cy=".42" r=".62"><stop offset="0" stop-color="#2551c2"/><stop offset=".65" stop-color="#17379c"/><stop offset="1" stop-color="#0b1c5e"/></radialGradient><clipPath id="c4"><circle cx="41" cy="38" r="33.300"/></clipPath></defs>
<rect width="80" height="80" fill="#090b12"/>
<circle cx="41" cy="38" r="33.500" fill="url(#e4)"/>
<g clip-path="url(#c4)"><g filter="url(#b4)">
<path d="M21 11c4-4 10-5 15-4 2 2 1 5-1 7-2 3-3 7-6 9-3 1-6 0-7-3-2-3-3-6-1-9z" fill="#cdb84a"/>
<path d="M29 7c4-2 9-1 12 1-1 4-4 8-8 10-2-3-4-7-4-11z" fill="#3b9440"/>
<path d="M40 31c5-2 12-1 17 3 4 3 7 7 6 11-3 4-7 6-9 10-2 4-3 9-6 11-3-2-3-7-3-11-1-4-4-7-5-11-1-5-2-10 0-13z" fill="#3a9438"/>
<path d="M49 45c4 0 8 2 10 5-3 2-5 4-7 7-2-3-3-8-3-12z" fill="#c4b24a"/>
<path d="M45 52c2 3 3 8 2 13-2-1-3-5-3-8z" fill="#c8b060"/>
<g fill="#fff" opacity=".85"><path d="M11 50c5 6 14 10 24 12 6 1 11 4 15 7-10 4-23 1-31-6-4-4-7-8-8-13z"/><path d="M46 10c6-2 13 1 17 5-4 0-8-1-11-2s-5-2-6-3z"/><path d="M58 44c3 1 6 3 8 5-3 0-6-1-8-5z"/></g>
</g>
<rect width="80" height="80" filter="url(#cl4)" opacity=".9"/>
</g></svg></div><div class="lbl"><svg class="mic" width="14" height="14" viewBox="0 0 14 14"><rect x="4.300" y="0.800" width="5.400" height="7.800" rx="2.700" fill="#ee5560"/><path d="M2.600 6.800a4.400 4.400 0 0 0 8.800 0" fill="none" stroke="#ee5560" stroke-width="1.400"/><path d="M7 11v1.800M4.300 12.900h5.400" fill="none" stroke="#ee5560" stroke-width="1.500"/><path d="M13.300 0.400L0.700 13.400" stroke="#262626" stroke-width="2.600"/><path d="M13.500 0.200L0.500 13.600" stroke="#ee5560" stroke-width="1.150"/></svg><span class="n" style="letter-spacing:-0.024px">Гридасов Костя 32 АГ</span></div></div>
<div class="abs tile" style="left:839.200px;top:350.400px"><div class="av"><svg width="80" height="80" viewBox="0 0 80 80"><defs><filter id="b5" x="-10%" y="-10%" width="120%" height="120%"><feGaussianBlur stdDeviation="0.900"/></filter></defs>
<rect width="80" height="80" fill="#e5e5e4"/>
<g filter="url(#b5)">
<path d="M0 80V72c7-5 16-8 25-9l8-3h16l9 1c9 1 16 4 22 8v11z" fill="#f2f2f5"/>
<path d="M41 4c-13 0-21 9-22 22-1 12-2 24-4 34-1 5-3 9-5 12 6 1 12-2 16-6l4-10h20l4 7c3 3 7 4 11 3-3-5-4-12-4-20 0-8 0-16-1-22C60 13 53 4 41 4z" fill="#35241c"/>
<path d="M29 50c3 3 7 5 11.500 5s8.500-2 11.500-5c0 7 3 14 7 19-5 5-12 8-19 8s-14-3-19-8c4-5 8-12 8-19z" fill="#e4b296"/>
<ellipse cx="40.500" cy="35.500" rx="15.500" ry="19.500" fill="#eabfa5"/>
<path d="M24.500 28c1-13 8-18.500 17-18.500 7 0 13 4 15.500 11-5-2-9-2-13 0-5 3-12 6-19.500 7.500z" fill="#38251c"/>
<path d="M50 15c5 3 7 10 6.500 18-2-5-4-9-8-11z" fill="#38251c"/>
<ellipse cx="33.500" cy="28.500" rx="2.800" ry="1.300" fill="#33241e"/><ellipse cx="47.500" cy="28.500" rx="2.800" ry="1.300" fill="#33241e"/>
<path d="M30 26c2-1 5-1.200 7.500-.5M44 25.500c2.500-.7 5.500-.5 7.500.5" stroke="#4a342a" stroke-width=".9" fill="none"/>
<path d="M35 41.500c3 1.600 8 1.600 11 0-2 3-9 3-11 0z" fill="#c9666a"/>
<path d="M38.500 36.500c1.200.9 3 .9 4.200 0" stroke="#cf9a82" stroke-width="1" fill="none"/>
<ellipse cx="29.500" cy="37" rx="3.500" ry="2.500" fill="#e8a796" opacity=".5"/><ellipse cx="51.500" cy="37" rx="3.500" ry="2.500" fill="#e8a796" opacity=".5"/>
</g></svg></div><div class="lbl nomic"><span class="n" style="letter-spacing:0.251px">Юлія Петрівна Пащенко</span></div></div>
<div class="abs tile" style="left:1037.200px;top:350.400px"><div class="av"><div style="width:80px;height:80px;background:#5d4037;position:relative"><div style="position:absolute;left:0;top:14.800px;width:80px;text-align:center;color:#fff;font:normal 43.500px/52px 'Liberation Sans',sans-serif;transform:scaleX(.93);-webkit-text-stroke:.6px #fff">N</div></div></div><div class="lbl"><svg class="mic" width="14" height="14" viewBox="0 0 14 14"><rect x="4.300" y="0.800" width="5.400" height="7.800" rx="2.700" fill="#ee5560"/><path d="M2.600 6.800a4.400 4.400 0 0 0 8.800 0" fill="none" stroke="#ee5560" stroke-width="1.400"/><path d="M7 11v1.800M4.300 12.900h5.400" fill="none" stroke="#ee5560" stroke-width="1.500"/><path d="M13.300 0.400L0.700 13.400" stroke="#262626" stroke-width="2.600"/><path d="M13.500 0.200L0.500 13.600" stroke="#ee5560" stroke-width="1.150"/></svg><span class="n" style="letter-spacing:0.067px">Ніна</span></div></div>
<div class="abs tile" style="left:839.200px;top:464.400px"><div class="av"><svg width="80" height="80" viewBox="0 0 80 80"><defs><filter id="b7" x="-10%" y="-10%" width="120%" height="120%"><feGaussianBlur stdDeviation="1.100"/></filter><linearGradient id="f7" x1="0" y1="0" x2="1" y2="0"><stop offset="0" stop-color="#f1c3ad"/><stop offset=".6" stop-color="#e8a890"/><stop offset="1" stop-color="#d98a72"/></linearGradient></defs>
<rect width="80" height="80" fill="#8a8a78"/>
<g filter="url(#b7)">
<rect x="0" y="0" width="24" height="18" fill="#d5dcc4"/>
<rect x="40" y="0" width="40" height="56" fill="#ecece8"/>
<path d="M38 0h9l-2 14h-7zM55 2l6 20-3 28h-7l2-26zM66 0h6l4 30v22h-6l-2-26z" fill="#3c3a34"/>
<path d="M46 9h10M46 15h10M46 21h9M60 12h14M60 20h14M62 28h12M62 36h12" stroke="#6a6860" stroke-width="1.700"/>
<rect x="56" y="52" width="24" height="28" fill="#88aa3a"/>
<path d="M58 52c7-3 15-3 22 0v7H58z" fill="#56742a"/>
<path d="M0 14C6 5 16 2 27 2c11 0 18 6 21 14 4 12 6 24 9 36 3 10 7 20 9 28H0z" fill="#e24a2a"/>
<path d="M26 3c9 0 16 5 20 13 3 8 5 18 7 28-5-10-9-22-16-30-5-6-12-9-20-8 2-2 5-3 9-3z" fill="#f06a3e"/>
<path d="M44 40c4 10 8 22 12 34l-8 6c-2-12-4-26-4-40z" fill="#c93c22"/>
<path d="M0 21c6-4 14-6 22-5 10 2 16 10 16 24 0 14-4 28-12 40H0z" fill="url(#f7)"/>
<path d="M0 19c5-5 12-7 20-5-8 2-13 6-16 12-2 4-3 8-4 12z" fill="#e25a36"/>
<path d="M2 29c3-1.500 7-1.500 10 0M23 29.500c3-1.500 7-1 10 .5" stroke="#7a5040" stroke-width="1.500" fill="none"/>
<ellipse cx="8" cy="34" rx="3.200" ry="1.400" fill="#4a342c"/><ellipse cx="29" cy="34.500" rx="3.200" ry="1.400" fill="#4a342c"/>
<ellipse cx="8" cy="37.500" rx="4.500" ry="1.800" fill="#d4907a" opacity=".6"/><ellipse cx="29" cy="38" rx="4.500" ry="1.800" fill="#d4907a" opacity=".6"/>
<path d="M11 59c4-2 11-2 17 0-3 4-13 4-17 0z" fill="#d63a2c"/>
<path d="M14 48c2 1.300 6 1.300 8.500 0" stroke="#c98a74" stroke-width="1.300" fill="none"/>
<path d="M6 66c6 4 16 4 22-1l-3 15H4z" fill="#dc9a82" opacity=".6"/>
</g></svg></div><div class="lbl"><svg class="mic" width="14" height="14" viewBox="0 0 14 14"><rect x="4.300" y="0.800" width="5.400" height="7.800" rx="2.700" fill="#ee5560"/><path d="M2.600 6.800a4.400 4.400 0 0 0 8.800 0" fill="none" stroke="#ee5560" stroke-width="1.400"/><path d="M7 11v1.800M4.300 12.900h5.400" fill="none" stroke="#ee5560" stroke-width="1.500"/><path d="M13.300 0.400L0.700 13.400" stroke="#262626" stroke-width="2.600"/><path d="M13.500 0.200L0.500 13.600" stroke="#ee5560" stroke-width="1.150"/></svg><span class="n" style="letter-spacing:0.301px">Анна Шкіндер-Барміна</span></div></div>
<div class="abs tile" style="left:1037.200px;top:464.400px"><div class="big">Гавриленко Іва...</div><div class="lbl"><svg class="mic" width="14" height="14" viewBox="0 0 14 14"><rect x="4.300" y="0.800" width="5.400" height="7.800" rx="2.700" fill="#ee5560"/><path d="M2.600 6.800a4.400 4.400 0 0 0 8.800 0" fill="none" stroke="#ee5560" stroke-width="1.400"/><path d="M7 11v1.800M4.300 12.900h5.400" fill="none" stroke="#ee5560" stroke-width="1.500"/><path d="M13.300 0.400L0.700 13.400" stroke="#262626" stroke-width="2.600"/><path d="M13.500 0.200L0.500 13.600" stroke="#ee5560" stroke-width="1.150"/></svg><span class="n" style="letter-spacing:0.064px">Гавриленко Іван 32АГ</span></div></div>
</div>

<!-- ZOOM TOOLBAR -->


<!-- TASKBAR -->

</div>
</body>
</html>
